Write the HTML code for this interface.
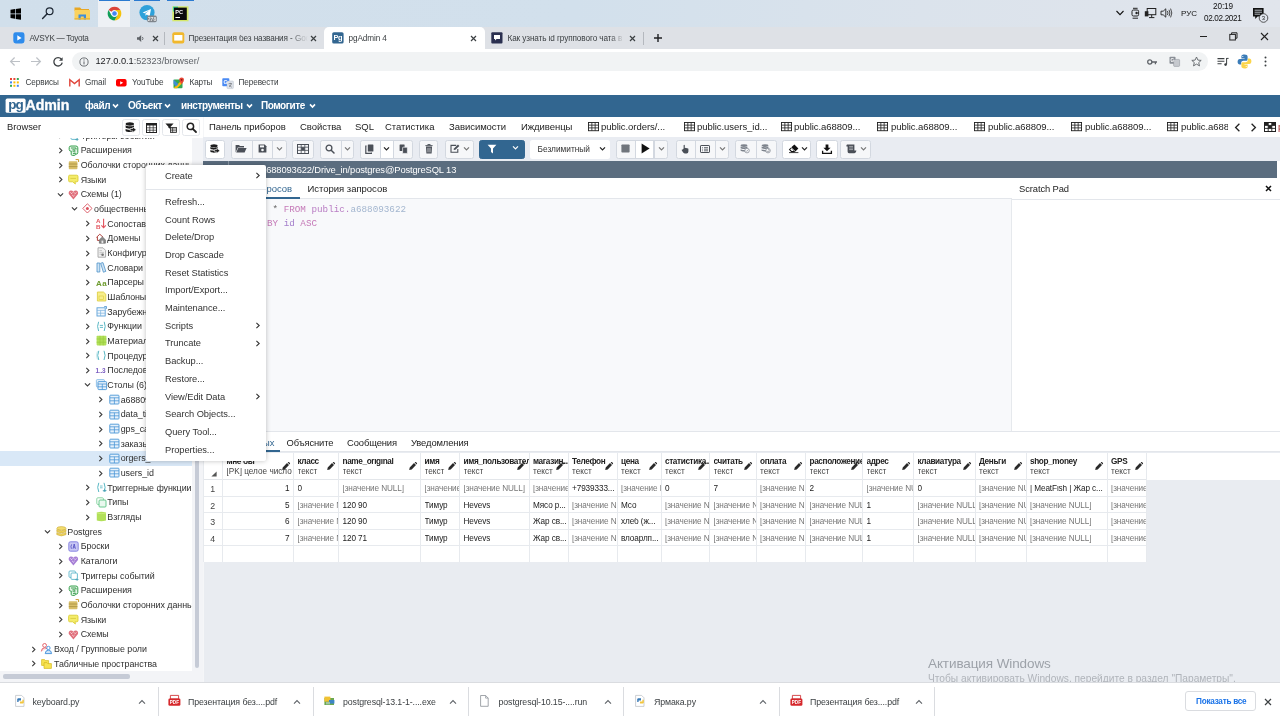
<!DOCTYPE html>
<html lang="ru">
<head>
<meta charset="utf-8">
<title>pgAdmin 4</title>
<style>
*{box-sizing:border-box;margin:0;padding:0}
html,body{width:1280px;height:720px;overflow:hidden;background:#fff}
body{position:relative;font-family:"Liberation Sans","DejaVu Sans",sans-serif;font-size:9px;color:#222;-webkit-font-smoothing:antialiased}
.abs{position:absolute}
.t{position:absolute;white-space:nowrap;line-height:1}
svg{position:absolute;overflow:visible}
/* taskbar */
#taskbar{left:0;top:0;width:1280px;height:27px;background:linear-gradient(90deg,#d1dfeb 0%,#d2e0ec 45%,#dbe3ec 72%,#e1e5ec 100%)}
/* chrome */
#tabstrip{left:0;top:27px;width:1280px;height:22px;background:#dee1e6}
#acttab{left:324px;top:27px;width:161px;height:22px;background:#fff;border-radius:5px 5px 0 0}
#addr{left:0;top:49px;width:1280px;height:24px;background:#fff}
#pill{left:72px;top:52px;width:1136px;height:19px;border-radius:10px;background:#f1f3f4}
#bm{left:0;top:73px;width:1280px;height:22px;background:#fff}
.tabt{font-size:8.2px;color:#3c4043;top:34.7px;letter-spacing:-0.1px}
.bmt{font-size:8.2px;color:#3c4043;top:78.9px;letter-spacing:-0.1px}
/* pgadmin */
#nav{left:0;top:95px;width:1280px;height:22px;background:#326690}
.navt{font-size:10px;color:#fff;top:100.7px;font-weight:bold;letter-spacing:-0.44px}
#left{left:0;top:117px;width:203px;height:565px;background:#fff}
#split{left:202.5px;top:117px;width:1.5px;height:565px;background:#f5f6f8}
#right{left:204px;top:117px;width:1076px;height:565px;background:#fff}
.ptab{font-size:9.5px;color:#222;top:122.4px;letter-spacing:-0.05px}
#tool{left:203px;top:137px;width:1077px;height:23.5px;background:#e9ecf2}
#title{left:203px;top:160.5px;width:1074px;height:17.5px;background:#5b6d7f}
#editor{left:204px;top:199px;width:808px;height:232px;background:#f8f9fb}
#scratch{left:1011px;top:178px;width:269px;height:253px;background:#fff;border-left:1px solid #e6e9ed}
#gridbg{left:204px;top:452px;width:1076px;height:230px;background:#e9ecf1}
.btn{position:absolute;top:139.5px;height:19px;background:#fff;border:1px solid #d5d9e0;border-radius:2.5px}
/* downloads */
#dl{left:0;top:682px;width:1280px;height:38px;background:#fff;border-top:1px solid #dadce0}
.dlt{font-size:8.8px;color:#3c4043;top:697.5px;letter-spacing:-0.1px}
.dsep{position:absolute;top:683px;width:1px;height:30px;background:#dadce0}
/* tree */
.tr{position:absolute;font-size:8.9px;letter-spacing:-0.05px;color:#303030;white-space:nowrap;line-height:1}
/* menu */
#menu{left:146px;top:164.7px;width:119.8px;height:296.6px;background:#fff;box-shadow:0 0 5px rgba(0,0,0,.25);border-radius:2px}
.mi{position:absolute;left:165px;font-size:9.3px;color:#333;letter-spacing:-0.05px;white-space:nowrap;line-height:1}
/* grid */
.gh{position:absolute;font-size:8.2px;line-height:1;white-space:nowrap;overflow:hidden}
.gc{position:absolute;font-size:8.2px;letter-spacing:-0.1px;line-height:1;white-space:nowrap;overflow:hidden;color:#222}
.nul{color:#777}
</style>
</head>
<body>
<div id="root" style="position:absolute;left:0;top:0;width:1280px;height:720px;will-change:transform">
<!-- ===== Windows taskbar ===== -->
<div class="abs" id="taskbar"></div>
<!-- ===== Chrome ===== -->
<div class="abs" id="tabstrip"></div>
<div class="abs" id="acttab"></div>
<div class="abs" id="addr"></div>
<div class="abs" id="pill"></div>
<div class="abs" id="bm"></div>
<!-- ===== pgAdmin ===== -->
<div class="abs" id="nav"></div>
<div class="abs" id="left"></div>
<div class="abs" id="split"></div>
<div class="abs" id="right"></div>
<div class="abs" id="tool"></div>
<div class="abs" id="title"></div>
<div class="abs" id="editor"></div>
<div class="abs" id="scratch"></div>
<div class="abs" id="gridbg"></div>
<!--TASKBAR-->
<!-- taskbar icons -->
<div class="abs" style="left:98px;top:0;width:32px;height:27px;background:#eef1f5"></div>
<div class="abs" style="left:99px;top:0;width:31px;height:1.3px;background:#2b7ad0"></div>
<div class="abs" style="left:134px;top:0;width:26px;height:1.3px;background:#2b7ad0"></div>
<div class="abs" style="left:167px;top:0;width:27px;height:1.3px;background:#2b7ad0"></div>
<svg style="left:10px;top:7.5px" width="12" height="12" viewBox="0 0 12 12"><path d="M0.5 1.8 L5 1.1 V5.6 H0.5Z M5.7 1 L11 0.2 V5.6 H5.7Z M0.5 6.3 H5 V10.8 L0.5 10.1Z M5.7 6.3 H11 V11.7 L5.7 10.9Z" fill="#000"/></svg>
<svg style="left:41px;top:6px" width="14" height="14" viewBox="0 0 14 14"><circle cx="8.6" cy="5.2" r="3.4" fill="none" stroke="#1d2733" stroke-width="1.2"/><path d="M6.2 7.8 L1.6 12.6" stroke="#1d2733" stroke-width="1.4" stroke-linecap="round"/></svg>
<svg style="left:74px;top:6.5px" width="17" height="13" viewBox="0 0 17 13"><path d="M0.5 0.5 H6 L7.5 2 H15 V4 H0.5Z" fill="#e8a723"/><rect x="0.5" y="3" width="15.5" height="9.5" fill="#fbd25e"/><path d="M4.5 12.5 V7.5 H12 V12.5 H9.8 V9.6 H6.7 V12.5Z" fill="#3f8edb"/><rect x="0.5" y="11.2" width="15.5" height="1.3" fill="#e6b33a"/></svg>
<svg style="left:107px;top:5.5px" width="15" height="15" viewBox="0 0 48 48"><circle cx="24" cy="24" r="22" fill="#fff"/><path d="M24 2 A22 22 0 0 1 43.05 13 H24 A11 11 0 0 0 14.47 18.5 L4.95 13 A22 22 0 0 1 24 2Z" fill="#db4437"/><path d="M43.05 13 A22 22 0 0 1 24 46 L33.53 29.5 A11 11 0 0 0 33.53 18.5 L24 13Z" fill="#f4c20d"/><path d="M24 46 A22 22 0 0 1 4.95 13 L14.47 29.5 A11 11 0 0 0 33.53 29.5Z" fill="#0f9d58"/><circle cx="24" cy="24" r="8.6" fill="#4285f4" stroke="#fff" stroke-width="2.4"/></svg>
<svg style="left:139px;top:5px" width="20" height="19" viewBox="0 0 20 19"><circle cx="8" cy="7.6" r="7.6" fill="#2ea1da"/><path d="M3.6 7.6 L12 4 L10.6 11.4 L7.8 9.4 L6.6 10.8 L6.4 8.6 L10.6 5.2 L5.6 8.3Z" fill="#fff"/><rect x="8.2" y="10.6" width="9.6" height="6.6" rx="1.6" fill="#7f858c"/><text x="13" y="16" font-size="5" fill="#e8e8e8" text-anchor="middle" font-family="Liberation Sans, sans-serif" font-weight="bold">278</text></svg>
<svg style="left:172px;top:5.5px" width="17" height="16" viewBox="0 0 17 16"><rect x="0.3" y="0.3" width="16.2" height="15" fill="#d5e86a"/><rect x="1" y="0.6" width="5" height="5" fill="#3ccf9a"/><rect x="2" y="1.6" width="12.8" height="12.4" fill="#0b0b0b"/><text x="3.3" y="7.8" font-size="5.6" fill="#fff" font-family="Liberation Sans, sans-serif" font-weight="bold">PC</text><rect x="3.4" y="11" width="4.6" height="1" fill="#fff"/></svg>
<!-- tray -->
<svg style="left:1115px;top:9px" width="10" height="8" viewBox="0 0 10 8"><path d="M1.5 2 L5 5.6 L8.5 2" fill="none" stroke="#111" stroke-width="1.1"/></svg>
<svg style="left:1130px;top:6.5px" width="11" height="13" viewBox="0 0 11 13"><rect x="2" y="3" width="6.6" height="6" rx="1.4" fill="none" stroke="#222" stroke-width="1"/><path d="M3 1.3 H7.6 M2.6 11.2 H8" stroke="#222" stroke-width="1"/><circle cx="6.6" cy="6" r="1.2" fill="#222"/></svg>
<svg style="left:1144px;top:7px" width="13" height="12" viewBox="0 0 13 12"><rect x="3.2" y="1.5" width="8.6" height="6.2" fill="none" stroke="#222" stroke-width="1"/><path d="M5 10.6 H10.4 M7.7 7.8 V10.4" stroke="#222" stroke-width="1"/><rect x="0.8" y="4.2" width="3.6" height="5.2" fill="#222"/></svg>
<svg style="left:1160px;top:7px" width="13" height="12" viewBox="0 0 13 12"><path d="M1 4.2 H3.2 L5.8 1.8 V10.2 L3.2 7.8 H1Z" fill="none" stroke="#222" stroke-width="0.9"/><path d="M7.4 4 Q8.6 6 7.4 8 M9 2.8 Q10.8 6 9 9.2 M10.6 1.6 Q13 6 10.6 10.4" fill="none" stroke="#222" stroke-width="0.8"/></svg>
<div class="t" style="left:1181px;top:9.5px;font-size:8px;color:#111">РУС</div>
<div class="t" style="left:1213px;top:2.5px;font-size:8.2px;color:#111;letter-spacing:-0.1px">20:19</div>
<div class="t" style="left:1204px;top:15px;font-size:8.2px;color:#111;letter-spacing:-0.35px">02.02.2021</div>
<svg style="left:1252px;top:7px" width="18" height="17" viewBox="0 0 18 17"><path d="M1 1 H11.6 V9.6 H5.6 L3.2 12 V9.6 H1Z" fill="#111"/><path d="M2.6 3.2 H10 M2.6 5.2 H10 M2.6 7.2 H8" stroke="#dde3ec" stroke-width="0.8"/><circle cx="11.5" cy="11" r="4.3" fill="#dfe4ec" stroke="#333" stroke-width="0.8"/><text x="11.5" y="13.2" font-size="6" fill="#222" text-anchor="middle" font-family="Liberation Sans, sans-serif">3</text></svg>
<!--/TASKBAR-->
<!--CHROME-->
<!-- tab 1 -->
<svg style="left:13px;top:32px" width="12" height="12" viewBox="0 0 12 12"><rect x="0.3" y="0.3" width="11.2" height="11.2" rx="2.4" fill="#2f8cec"/><path d="M4.3 3.3 L8.6 5.9 L4.3 8.5Z" fill="#fff"/></svg>
<div class="t tabt" style="left:29.5px;letter-spacing:-0.32px">AVSYK — Toyota</div>
<svg style="left:136px;top:33.5px" width="10" height="9" viewBox="0 0 10 9"><path d="M1 3.2 H2.8 L5.2 1 V8 L2.8 5.8 H1Z" fill="#5f6368"/><path d="M6.4 3 Q7.6 4.5 6.4 6" fill="none" stroke="#5f6368" stroke-width="0.9"/></svg>
<svg style="left:151.5px;top:35px" width="7" height="7" viewBox="0 0 7 7"><path d="M1 1 L6 6 M6 1 L1 6" stroke="#3c4043" stroke-width="1.2"/></svg>
<div class="abs" style="left:164px;top:32px;width:1px;height:13px;background:#b4b8be"></div>
<!-- tab 2 -->
<svg style="left:172px;top:32px" width="13" height="12" viewBox="0 0 13 12"><rect x="0.3" y="0.3" width="12" height="11.2" rx="2" fill="#f1b82d"/><rect x="2.2" y="3" width="8.2" height="5.6" fill="#fff"/></svg>
<div class="t tabt" style="left:188.5px;width:119px;overflow:hidden;-webkit-mask-image:linear-gradient(90deg,#000 85%,transparent 100%)">Презентация без названия - Google</div>
<svg style="left:310px;top:35px" width="7" height="7" viewBox="0 0 7 7"><path d="M1 1 L6 6 M6 1 L1 6" stroke="#3c4043" stroke-width="1.2"/></svg>
<!-- active tab -->
<svg style="left:332px;top:32px" width="12" height="12" viewBox="0 0 12 12"><rect x="0.2" y="0.2" width="11.4" height="11.4" rx="1.6" fill="#326690"/><text x="5.9" y="8.3" font-size="7.4" fill="#fff" text-anchor="middle" font-family="Liberation Sans, sans-serif" font-weight="bold" letter-spacing="-0.4">Pg</text></svg>
<div class="t tabt" style="left:348.5px">pgAdmin 4</div>
<svg style="left:469.5px;top:35px" width="7" height="7" viewBox="0 0 7 7"><path d="M1 1 L6 6 M6 1 L1 6" stroke="#3c4043" stroke-width="1.2"/></svg>
<!-- tab 4 -->
<svg style="left:491px;top:32px" width="12" height="12" viewBox="0 0 12 12"><rect x="0.3" y="0.3" width="11.2" height="11.2" rx="1" fill="#2b3050"/><path d="M3 3 H9 V7 H5.6 L4 8.6 V7 H3Z" fill="#fff"/></svg>
<div class="t tabt" style="left:507.5px;width:116px;overflow:hidden;-webkit-mask-image:linear-gradient(90deg,#000 88%,transparent 100%)">Как узнать id группового чата в Telegram</div>
<svg style="left:629px;top:35px" width="7" height="7" viewBox="0 0 7 7"><path d="M1 1 L6 6 M6 1 L1 6" stroke="#3c4043" stroke-width="1.2"/></svg>
<div class="abs" style="left:643px;top:32px;width:1px;height:13px;background:#b4b8be"></div>
<svg style="left:653px;top:33px" width="10" height="10" viewBox="0 0 10 10"><path d="M5 1 V9 M1 5 H9" stroke="#202124" stroke-width="1.4"/></svg>
<!-- window controls -->
<div class="abs" style="left:1200px;top:36px;width:7px;height:1px;background:#222"></div>
<svg style="left:1229px;top:32px" width="9" height="9" viewBox="0 0 9 9"><rect x="0.8" y="2.4" width="5.6" height="5.6" fill="none" stroke="#222" stroke-width="1"/><path d="M2.6 2.2 V0.8 H8 V6.2 H6.6" fill="none" stroke="#222" stroke-width="1"/></svg>
<svg style="left:1260px;top:32px" width="9" height="9" viewBox="0 0 9 9"><path d="M1 1 L8 8 M8 1 L1 8" stroke="#222" stroke-width="1.1"/></svg>
<!-- address bar -->
<svg style="left:9px;top:56px" width="12" height="11" viewBox="0 0 12 11"><path d="M11 5.5 H1.8 M5.6 1.5 L1.6 5.5 L5.6 9.5" fill="none" stroke="#bdc1c6" stroke-width="1.2"/></svg>
<svg style="left:30px;top:56px" width="12" height="11" viewBox="0 0 12 11"><path d="M1 5.5 H10.2 M6.4 1.5 L10.4 5.5 L6.4 9.5" fill="none" stroke="#bdc1c6" stroke-width="1.2"/></svg>
<svg style="left:52px;top:55.5px" width="12" height="12" viewBox="0 0 12 12"><path d="M9.4 3.2 A4.2 4.2 0 1 0 10.2 6.6" fill="none" stroke="#3c4043" stroke-width="1.3"/><path d="M10.6 1.2 V4.8 H7Z" fill="#3c4043"/></svg>
<svg style="left:78.5px;top:56.5px" width="10" height="10" viewBox="0 0 10 10"><circle cx="5" cy="5" r="4.1" fill="none" stroke="#5f6368" stroke-width="0.9"/><path d="M5 4.4 V7.4" stroke="#5f6368" stroke-width="1"/><circle cx="5" cy="2.9" r="0.6" fill="#5f6368"/></svg>
<div class="t" style="left:95.5px;top:56.5px;font-size:9.25px;color:#202124;letter-spacing:-0.05px">127.0.0.1<span style="color:#5f6368">:52323/browser/</span></div>
<svg style="left:1147px;top:57.5px" width="11" height="8" viewBox="0 0 11 8"><circle cx="2.8" cy="4" r="2.1" fill="none" stroke="#5f6368" stroke-width="1.3"/><path d="M4.8 4 H10 M8.4 4 V6.2" stroke="#5f6368" stroke-width="1.3"/></svg>
<svg style="left:1169px;top:56px" width="11" height="11" viewBox="0 0 11 11"><rect x="0.5" y="0.8" width="6" height="7" rx="0.8" fill="#8a8f96"/><rect x="4.6" y="3.4" width="6" height="7" rx="0.8" fill="#c6c9ce" stroke="#8a8f96" stroke-width="0.5"/><text x="3.4" y="6.4" font-size="4.6" fill="#fff" text-anchor="middle" font-family="Liberation Sans, sans-serif" font-weight="bold">G</text></svg>
<svg style="left:1190.5px;top:55.5px" width="11" height="11" viewBox="0 0 11 11"><path d="M5.5 1 L6.9 4.1 L10.2 4.4 L7.7 6.6 L8.5 9.9 L5.5 8.1 L2.5 9.9 L3.3 6.6 L0.8 4.4 L4.1 4.1Z" fill="none" stroke="#5f6368" stroke-width="0.9" stroke-linejoin="round"/></svg>
<svg style="left:1217px;top:56.5px" width="12" height="10" viewBox="0 0 12 10"><path d="M0.5 1.6 H7.4 M0.5 4.2 H7.4 M0.5 6.8 H4.6" stroke="#3c4043" stroke-width="1.1"/><path d="M9.6 1 V7.2 M9.6 1.4 H11.6" stroke="#3c4043" stroke-width="1" fill="none"/><circle cx="8.6" cy="7.6" r="1.3" fill="#3c4043"/></svg>
<svg style="left:1236.5px;top:53.5px" width="15" height="15" viewBox="0 0 15 15"><path d="M7.4 0.6 C4.6 0.6 4.4 1.8 4.4 2.8 V4.4 H7.6 V5 H2.8 C1.4 5 0.6 6.2 0.6 7.8 C0.6 9.6 1.4 10.6 2.8 10.6 H4.2 V8.8 C4.2 7.6 5.2 6.8 6.4 6.8 H9 C10 6.8 10.6 6.2 10.6 5.2 V2.8 C10.6 1.4 9.6 0.6 7.4 0.6Z" fill="#3b7cb8"/><path d="M7.6 14.4 C10.4 14.4 10.6 13.2 10.6 12.2 V10.6 H7.4 V10 H12.2 C13.6 10 14.4 8.8 14.4 7.2 C14.4 5.4 13.6 4.4 12.2 4.4 H10.8 V6.2 C10.8 7.4 9.8 8.2 8.6 8.2 H6 C5 8.2 4.4 8.8 4.4 9.8 V12.2 C4.4 13.6 5.4 14.4 7.6 14.4Z" fill="#fbd54a"/><circle cx="5.8" cy="2.5" r="0.6" fill="#fff"/><circle cx="9.2" cy="12.5" r="0.6" fill="#fff"/></svg>
<svg style="left:1263.5px;top:56px" width="3" height="11" viewBox="0 0 3 11"><circle cx="1.5" cy="1.6" r="1" fill="#3c4043"/><circle cx="1.5" cy="5.5" r="1" fill="#3c4043"/><circle cx="1.5" cy="9.4" r="1" fill="#3c4043"/></svg>
<!-- bookmarks -->
<svg style="left:10px;top:78px" width="9" height="9" viewBox="0 0 9 9"><g><rect x="0" y="0" width="2" height="2" fill="#ea4335"/><rect x="3.4" y="0" width="2" height="2" fill="#ea4335"/><rect x="6.8" y="0" width="2" height="2" fill="#34a853"/><rect x="0" y="3.4" width="2" height="2" fill="#4285f4"/><rect x="3.4" y="3.4" width="2" height="2" fill="#fbbc05"/><rect x="6.8" y="3.4" width="2" height="2" fill="#fbbc05"/><rect x="0" y="6.8" width="2" height="2" fill="#34a853"/><rect x="3.4" y="6.8" width="2" height="2" fill="#fbbc05"/><rect x="6.8" y="6.8" width="2" height="2" fill="#4285f4"/></g></svg>
<div class="t bmt" style="left:25.5px">Сервисы</div>
<svg style="left:68.5px;top:79px" width="11" height="8" viewBox="0 0 11 8"><path d="M0.8 7.6 V0.8 L5.5 4.6 L10.2 0.8 V7.6" fill="none" stroke="#e0443a" stroke-width="1.4"/></svg>
<div class="t bmt" style="left:85px">Gmail</div>
<svg style="left:116px;top:78.5px" width="11" height="8" viewBox="0 0 11 8"><rect x="0" y="0" width="10.6" height="7.6" rx="2" fill="#f00"/><path d="M4.2 2.2 L7.2 3.8 L4.2 5.4Z" fill="#fff"/></svg>
<div class="t bmt" style="left:132px">YouTube</div>
<svg style="left:173px;top:77px" width="12" height="12" viewBox="0 0 12 12"><rect x="0.5" y="2.6" width="9" height="8.6" rx="1" fill="#34a853"/><path d="M0.5 11.2 L9.5 2.6 V6 L4 11.2Z" fill="#fbbc05"/><path d="M0.5 2.6 L5.4 7.2 L3.2 9.4 L0.5 6.8Z" fill="#4285f4" opacity=".8"/><circle cx="8.6" cy="2.8" r="2.4" fill="#ea4335"/><path d="M6.6 4 L8.6 7.4 L10.6 4Z" fill="#ea4335"/><circle cx="8.6" cy="2.8" r="0.9" fill="#7a1a12"/></svg>
<div class="t bmt" style="left:189.5px">Карты</div>
<svg style="left:222px;top:77.5px" width="12" height="11" viewBox="0 0 12 11"><rect x="0.3" y="0.3" width="7" height="8" rx="0.8" fill="#4a8af4"/><rect x="5" y="3" width="6.4" height="7.6" rx="0.8" fill="#dfe3ea" stroke="#aab2bf" stroke-width="0.4"/><text x="3.6" y="6.4" font-size="5.4" fill="#fff" text-anchor="middle" font-family="Liberation Sans, sans-serif" font-weight="bold">G</text><path d="M6.6 5.6 H10 M8.3 4.8 V5.6 M7 9 Q9 7.6 9.4 5.8 M7.2 6.8 Q8.2 8.6 9.8 9.2" fill="none" stroke="#5f6368" stroke-width="0.6"/></svg>
<div class="t bmt" style="left:238.5px">Перевести</div>
<!--/CHROME-->
<!--NAV-->
<svg style="left:5px;top:98px" width="66" height="16" viewBox="0 0 66 16"><rect x="0.6" y="0.6" width="20" height="14.2" rx="1.6" fill="#fff"/><text x="10.6" y="11.2" font-size="13.5" fill="#326690" text-anchor="middle" font-family="Liberation Sans, sans-serif" font-weight="bold" letter-spacing="-0.8">pg</text><text x="20.6" y="12.4" font-size="14.2" fill="#fff" stroke="#fff" stroke-width="0.35" font-family="Liberation Sans, sans-serif" font-weight="bold" letter-spacing="-0.1">Admin</text></svg>
<div class="t navt" style="left:85px">файл</div>
<svg style="left:111.5px;top:103px" width="7" height="6" viewBox="0 0 7 6"><path d="M1 1.4 L3.5 4 L6 1.4" fill="none" stroke="#fff" stroke-width="1.6"/></svg>
<div class="t navt" style="left:128px">Объект</div>
<svg style="left:163.5px;top:103px" width="7" height="6" viewBox="0 0 7 6"><path d="M1 1.4 L3.5 4 L6 1.4" fill="none" stroke="#fff" stroke-width="1.6"/></svg>
<div class="t navt" style="left:181px">инструменты</div>
<svg style="left:245.5px;top:103px" width="7" height="6" viewBox="0 0 7 6"><path d="M1 1.4 L3.5 4 L6 1.4" fill="none" stroke="#fff" stroke-width="1.6"/></svg>
<div class="t navt" style="left:261px">Помогите</div>
<svg style="left:308.5px;top:103px" width="7" height="6" viewBox="0 0 7 6"><path d="M1 1.4 L3.5 4 L6 1.4" fill="none" stroke="#fff" stroke-width="1.6"/></svg>
<!-- browser header -->
<div class="t" style="left:7px;top:122.5px;font-size:9.3px;color:#222">Browser</div>
<div class="btn" style="left:122px;top:119px;width:17.5px;height:16.5px;border-color:#e4e7eb"></div>
<div class="btn" style="left:142px;top:119px;width:17.5px;height:16.5px;border-color:#e4e7eb"></div>
<div class="btn" style="left:162px;top:119px;width:17.5px;height:16.5px;border-color:#e4e7eb"></div>
<div class="btn" style="left:182px;top:119px;width:17.5px;height:16.5px;border-color:#e4e7eb"></div>
<svg style="left:125.3px;top:122.2px" width="11.5" height="11" viewBox="0 0 11.5 11"><ellipse cx="4.8" cy="2" rx="4.2" ry="1.7" fill="#1c1c1c"/><path d="M0.6 3.3 C1.6 4.7 8 4.7 9 3.3 V5.6 C8 7 1.6 7 0.6 5.6Z M0.6 6.7 C1.6 8.1 8 8.1 9 6.7 V9 C8 10.4 1.6 10.4 0.6 9Z" fill="#1c1c1c"/><path d="M5.2 6.5 H7.8 V4.9 L11.2 7.7 L7.8 10.5 V8.9 H5.2Z" fill="#1c1c1c" stroke="#fff" stroke-width="0.6"/></svg>
<svg style="left:145.5px;top:122.5px" width="11" height="10" viewBox="0 0 11 10"><rect x="0.5" y="0.5" width="10" height="9" fill="none" stroke="#222" stroke-width="1"/><rect x="0.5" y="0.5" width="10" height="2" fill="#222"/><path d="M0.5 4.8 H10.5 M0.5 7.2 H10.5 M3.8 0.5 V9.5 M7.2 0.5 V9.5" stroke="#222" stroke-width="0.7"/></svg>
<svg style="left:165px;top:122.5px" width="12" height="10" viewBox="0 0 12 10"><path d="M0.4 0.6 H8.6 L5.6 3.8 V6 L3.4 4.8 V3.8Z" fill="#222"/><rect x="5.4" y="4.4" width="6" height="5" fill="#fff" stroke="#222" stroke-width="0.8"/><path d="M5.4 6 H11.4 M5.4 7.8 H11.4 M7.6 4.4 V9.4" stroke="#222" stroke-width="0.7"/></svg>
<svg style="left:185.5px;top:122px" width="11" height="11" viewBox="0 0 11 11"><circle cx="4.4" cy="4.4" r="3.2" fill="none" stroke="#222" stroke-width="1.5"/><path d="M6.8 6.8 L10 10" stroke="#222" stroke-width="1.8" stroke-linecap="round"/></svg>
<!--/NAV-->
<!--TREE-->
<div class="abs" style="left:0;top:138px;width:192px;height:533px;overflow:hidden">
<div class="abs" style="left:0;top:313.0px;width:192px;height:14.6px;background:#d9e8f7"></div>
<svg style="left:58.1px;top:-5.9px" width="6" height="7" viewBox="0 0 6 7"><path d="M1.3 0.9 L3.9 3.5 L1.3 6.1" fill="none" stroke="#3d3d3d" stroke-width="1.1"/></svg>
<svg style="left:67.9px;top:-8.0px" width="11" height="11" viewBox="0 0 11 11"><rect x="1" y="1" width="6.4" height="6.4" rx="1" fill="#fff" stroke="#5bb6c9" stroke-width="0.9"/><rect x="3" y="3" width="6.4" height="6.4" rx="1" fill="#fff" stroke="#5bb6c9" stroke-width="0.9"/><path d="M7.4 9.6 H10 M8.8 8.4 L10 9.6 L8.8 10.8" stroke="#2d8fa6" stroke-width="0.7" fill="none"/></svg>
<div class="tr" style="left:80.7px;top:-6.4px">Триггеры событий</div>
<svg style="left:58.1px;top:8.8px" width="6" height="7" viewBox="0 0 6 7"><path d="M1.3 0.9 L3.9 3.5 L1.3 6.1" fill="none" stroke="#3d3d3d" stroke-width="1.1"/></svg>
<svg style="left:67.9px;top:6.7px" width="11" height="11" viewBox="0 0 11 11"><path d="M1.2 2.6 Q1.2 1 3 1 H7.8 Q9.8 1 9.8 2.8 V7.6 Q9.8 9.2 8 9.2 H7.4 V9.6 Q7.4 10.4 6.4 10.4 H4.4 Q3.2 10.4 3.2 9.4 V6 H2.6 Q1.2 6 1.2 4.6Z" fill="#e4f5e6" stroke="#35a04c" stroke-width="1"/><path d="M3 3 H8 V4.6 M4.4 4.8 H6.8 V7.4 M4.6 6.2 H6 M5 8.4 H7.8" stroke="#2c9444" stroke-width="0.9" fill="none"/></svg>
<div class="tr" style="left:80.7px;top:8.3px">Расширения</div>
<svg style="left:58.1px;top:23.5px" width="6" height="7" viewBox="0 0 6 7"><path d="M1.3 0.9 L3.9 3.5 L1.3 6.1" fill="none" stroke="#3d3d3d" stroke-width="1.1"/></svg>
<svg style="left:67.9px;top:21.4px" width="11" height="11" viewBox="0 0 11 11"><rect x="0.8" y="2.2" width="8.6" height="8" rx="0.8" fill="#d8bf6a"/><path d="M0.8 5 H9.4 M0.8 7.6 H9.4" stroke="#a8903f" stroke-width="0.8"/><path d="M7.6 0.6 L10.6 0.6 L10.6 3" stroke="#c79a2e" stroke-width="1" fill="none"/></svg>
<div class="tr" style="left:80.7px;top:23.0px">Оболочки сторонних данных</div>
<svg style="left:58.1px;top:38.1px" width="6" height="7" viewBox="0 0 6 7"><path d="M1.3 0.9 L3.9 3.5 L1.3 6.1" fill="none" stroke="#3d3d3d" stroke-width="1.1"/></svg>
<svg style="left:67.9px;top:36.0px" width="11" height="11" viewBox="0 0 11 11"><path d="M1.6 1.2 H8.8 Q10 1.2 10 2.4 V6.6 Q10 7.8 8.8 7.8 H7 L7.4 10 L4.6 7.8 H1.6 Q0.6 7.8 0.6 6.6 V2.4 Q0.6 1.2 1.6 1.2Z" fill="#f4ec6a" stroke="#d8c92a" stroke-width="0.8"/><path d="M2.4 4.4 H8" stroke="#c9b82a" stroke-width="0.6"/></svg>
<div class="tr" style="left:80.7px;top:37.6px">Языки</div>
<svg style="left:57.2px;top:53.7px" width="7" height="6" viewBox="0 0 7 6"><path d="M0.9 1.3 L3.5 3.9 L6.1 1.3" fill="none" stroke="#3d3d3d" stroke-width="1.1"/></svg>
<svg style="left:67.9px;top:50.7px" width="11" height="11" viewBox="0 0 11 11"><path d="M5.4 10.4 L0.8 5 Q0.2 2 2.6 1.4 Q4.4 1.2 5.4 2.8 Q6.4 1.2 8.2 1.4 Q10.6 2 10 5Z" fill="#e0707c"/><path d="M2.4 3.4 L3.6 4.6 L4.8 3.4 M6 3.4 L7.2 4.6 L8.4 3.4 M4.2 6 L5.4 7.2 L6.6 6" stroke="#fff" stroke-width="0.7" fill="none"/></svg>
<div class="tr" style="left:80.7px;top:52.3px">Схемы (1)</div>
<svg style="left:70.5px;top:68.4px" width="7" height="6" viewBox="0 0 7 6"><path d="M0.9 1.3 L3.5 3.9 L6.1 1.3" fill="none" stroke="#3d3d3d" stroke-width="1.1"/></svg>
<svg style="left:81.6px;top:65.4px" width="11" height="11" viewBox="0 0 11 11"><path d="M5.4 0.8 L10 5.4 L5.4 10 L0.8 5.4Z" fill="#fff" stroke="#d9505c" stroke-width="0.9"/><circle cx="5.4" cy="5.4" r="1.5" fill="#d9505c"/></svg>
<div class="tr" style="left:94.0px;top:67.0px">общественный</div>
<svg style="left:84.7px;top:82.1px" width="6" height="7" viewBox="0 0 6 7"><path d="M1.3 0.9 L3.9 3.5 L1.3 6.1" fill="none" stroke="#3d3d3d" stroke-width="1.1"/></svg>
<svg style="left:95.5px;top:80.0px" width="11" height="11" viewBox="0 0 11 11"><text x="0" y="5" font-size="6.2" font-weight="bold" fill="#e2525c" font-family="Liberation Sans, sans-serif">A</text><text x="0" y="10.8" font-size="6.2" font-weight="bold" fill="#e2525c" font-family="Liberation Sans, sans-serif">B</text><path d="M7.6 0.8 V9.6 M5.4 7.4 L7.6 9.8 L9.8 7.4" stroke="#e2525c" stroke-width="1.1" fill="none"/></svg>
<div class="tr" style="left:107.3px;top:81.6px">Сопоставления</div>
<svg style="left:84.7px;top:96.8px" width="6" height="7" viewBox="0 0 6 7"><path d="M1.3 0.9 L3.9 3.5 L1.3 6.1" fill="none" stroke="#3d3d3d" stroke-width="1.1"/></svg>
<svg style="left:95.5px;top:94.7px" width="11" height="11" viewBox="0 0 11 11"><path d="M0.4 4.4 L3.8 1.2 L7.2 4.4 M1.4 4 V7.4 H3.4" stroke="#b0433e" stroke-width="1" fill="none"/><path d="M3.4 6.8 L6.4 4 L9.4 6.8 V10.2 H3.4Z" fill="#8a8a8a" stroke="#5a5a5a" stroke-width="0.6"/><rect x="5.5" y="7.6" width="1.8" height="2.6" fill="#e8e8e8"/></svg>
<div class="tr" style="left:107.3px;top:96.3px">Домены</div>
<svg style="left:84.7px;top:111.5px" width="6" height="7" viewBox="0 0 6 7"><path d="M1.3 0.9 L3.9 3.5 L1.3 6.1" fill="none" stroke="#3d3d3d" stroke-width="1.1"/></svg>
<svg style="left:95.5px;top:109.4px" width="11" height="11" viewBox="0 0 11 11"><path d="M2 0.8 H7 L9.6 3.4 V10.2 H2Z" fill="#f2f2f2" stroke="#9a9a9a" stroke-width="0.8"/><path d="M3.4 3.6 H6 M3.4 5.4 H8 M3.4 7.2 H8" stroke="#aaa" stroke-width="0.6"/><circle cx="6.6" cy="7.8" r="1.3" fill="#777"/></svg>
<div class="tr" style="left:107.3px;top:111.0px">Конфигурации FTS</div>
<svg style="left:84.7px;top:126.1px" width="6" height="7" viewBox="0 0 6 7"><path d="M1.3 0.9 L3.9 3.5 L1.3 6.1" fill="none" stroke="#3d3d3d" stroke-width="1.1"/></svg>
<svg style="left:95.5px;top:124.0px" width="11" height="11" viewBox="0 0 11 11"><path d="M1 1 H3.8 V10 H1Z" fill="#cfe4f5" stroke="#4f93c9" stroke-width="0.8"/><path d="M4.6 1.2 L7 0.6 L9.8 9.4 L7.4 10.2Z" fill="#cfe4f5" stroke="#4f93c9" stroke-width="0.8"/></svg>
<div class="tr" style="left:107.3px;top:125.6px">Словари FTS</div>
<svg style="left:84.7px;top:140.8px" width="6" height="7" viewBox="0 0 6 7"><path d="M1.3 0.9 L3.9 3.5 L1.3 6.1" fill="none" stroke="#3d3d3d" stroke-width="1.1"/></svg>
<svg style="left:95.5px;top:138.7px" width="11" height="11" viewBox="0 0 11 11"><text x="0" y="8.6" font-size="8" font-weight="bold" fill="#6e9c2f" font-family="Liberation Sans, sans-serif" letter-spacing="0.4">Aa</text></svg>
<div class="tr" style="left:107.3px;top:140.3px">Парсеры FTS</div>
<svg style="left:84.7px;top:155.5px" width="6" height="7" viewBox="0 0 6 7"><path d="M1.3 0.9 L3.9 3.5 L1.3 6.1" fill="none" stroke="#3d3d3d" stroke-width="1.1"/></svg>
<svg style="left:95.5px;top:153.4px" width="11" height="11" viewBox="0 0 11 11"><path d="M1.4 1 H7.4 L9.8 3.2 V10 H1.4Z" fill="#f7ee8a" stroke="#dcca3a" stroke-width="0.8"/><rect x="3" y="5" width="4.6" height="3.4" fill="none" stroke="#dcca3a" stroke-width="0.6"/></svg>
<div class="tr" style="left:107.3px;top:155.0px">Шаблоны FTS</div>
<svg style="left:84.7px;top:170.1px" width="6" height="7" viewBox="0 0 6 7"><path d="M1.3 0.9 L3.9 3.5 L1.3 6.1" fill="none" stroke="#3d3d3d" stroke-width="1.1"/></svg>
<svg style="left:95.5px;top:168.0px" width="11" height="11" viewBox="0 0 11 11"><rect x="1" y="1.8" width="8.2" height="8.2" fill="#f2f8fd" stroke="#5a9fd8" stroke-width="0.9"/><path d="M1 4.4 H9.2 M1 7.2 H9.2 M4.6 4.4 V10" stroke="#7db3e0" stroke-width="0.7"/><path d="M8.2 0.5 H10.5 V2.8" stroke="#4a90d0" stroke-width="0.8" fill="none"/></svg>
<div class="tr" style="left:107.3px;top:169.6px">Зарубежные таблицы</div>
<svg style="left:84.7px;top:184.8px" width="6" height="7" viewBox="0 0 6 7"><path d="M1.3 0.9 L3.9 3.5 L1.3 6.1" fill="none" stroke="#3d3d3d" stroke-width="1.1"/></svg>
<svg style="left:95.5px;top:182.7px" width="11" height="11" viewBox="0 0 11 11"><path d="M2.6 0.8 Q0.6 5.4 2.6 10 M8.2 0.8 Q10.2 5.4 8.2 10" stroke="#58b7c4" stroke-width="1" fill="none"/><path d="M3.8 4.4 H7 M3.8 6.4 H7" stroke="#58b7c4" stroke-width="0.9"/></svg>
<div class="tr" style="left:107.3px;top:184.3px">Функции</div>
<svg style="left:84.7px;top:199.5px" width="6" height="7" viewBox="0 0 6 7"><path d="M1.3 0.9 L3.9 3.5 L1.3 6.1" fill="none" stroke="#3d3d3d" stroke-width="1.1"/></svg>
<svg style="left:95.5px;top:197.4px" width="11" height="11" viewBox="0 0 11 11"><rect x="0.6" y="0.8" width="9.8" height="9.6" rx="0.8" fill="#b2e05a"/><path d="M0.6 4 H10.4 M0.6 7.2 H10.4 M4 0.8 V10.4 M7.2 0.8 V10.4" stroke="#9acc3c" stroke-width="0.7"/></svg>
<div class="tr" style="left:107.3px;top:199.0px">Материализованные представления</div>
<svg style="left:84.7px;top:214.1px" width="6" height="7" viewBox="0 0 6 7"><path d="M1.3 0.9 L3.9 3.5 L1.3 6.1" fill="none" stroke="#3d3d3d" stroke-width="1.1"/></svg>
<svg style="left:95.5px;top:212.0px" width="11" height="11" viewBox="0 0 11 11"><path d="M2.8 0.8 Q0.6 5.4 2.8 10 M8 0.8 Q10.2 5.4 8 10" stroke="#58b7c4" stroke-width="1" fill="none"/><path d="M1.4 1.4 Q0 5.4 1.4 9.4" stroke="#9fd6de" stroke-width="0.7" fill="none"/></svg>
<div class="tr" style="left:107.3px;top:213.6px">Процедуры</div>
<svg style="left:84.7px;top:228.8px" width="6" height="7" viewBox="0 0 6 7"><path d="M1.3 0.9 L3.9 3.5 L1.3 6.1" fill="none" stroke="#3d3d3d" stroke-width="1.1"/></svg>
<svg style="left:95.5px;top:226.7px" width="11" height="11" viewBox="0 0 11 11"><text x="-0.4" y="8.2" font-size="6.4" font-weight="bold" fill="#7a5bc0" font-family="Liberation Sans, sans-serif" letter-spacing="-0.2">1..3</text></svg>
<div class="tr" style="left:107.3px;top:228.3px">Последовательности</div>
<svg style="left:83.8px;top:244.4px" width="7" height="6" viewBox="0 0 7 6"><path d="M0.9 1.3 L3.5 3.9 L6.1 1.3" fill="none" stroke="#3d3d3d" stroke-width="1.1"/></svg>
<svg style="left:95.5px;top:241.4px" width="11" height="11" viewBox="0 0 11 11"><rect x="0.4" y="0.6" width="8" height="7.4" rx="0.8" fill="#e6f1fb" stroke="#7db6e4" stroke-width="0.8"/><rect x="2" y="2.6" width="8.6" height="8" rx="0.8" fill="#e6f1fb" stroke="#4a96d6" stroke-width="0.9"/><path d="M2 5 H10.6 M2 7.8 H10.6 M6.3 5 V10.6" stroke="#4a96d6" stroke-width="0.8"/></svg>
<div class="tr" style="left:107.3px;top:243.0px">Столы (6)</div>
<svg style="left:98.1px;top:258.1px" width="6" height="7" viewBox="0 0 6 7"><path d="M1.3 0.9 L3.9 3.5 L1.3 6.1" fill="none" stroke="#3d3d3d" stroke-width="1.1"/></svg>
<svg style="left:108.5px;top:256.0px" width="11" height="11" viewBox="0 0 11 11"><rect x="0.8" y="1.2" width="9.2" height="8.8" rx="0.8" fill="#e6f1fb" stroke="#4a96d6" stroke-width="0.9"/><path d="M0.8 3.8 H10 M0.8 6.8 H10 M5.4 3.8 V10" stroke="#4a96d6" stroke-width="0.8"/></svg>
<div class="tr" style="left:120.7px;top:257.6px">a688093622</div>
<svg style="left:98.1px;top:272.8px" width="6" height="7" viewBox="0 0 6 7"><path d="M1.3 0.9 L3.9 3.5 L1.3 6.1" fill="none" stroke="#3d3d3d" stroke-width="1.1"/></svg>
<svg style="left:108.5px;top:270.7px" width="11" height="11" viewBox="0 0 11 11"><rect x="0.8" y="1.2" width="9.2" height="8.8" rx="0.8" fill="#e6f1fb" stroke="#4a96d6" stroke-width="0.9"/><path d="M0.8 3.8 H10 M0.8 6.8 H10 M5.4 3.8 V10" stroke="#4a96d6" stroke-width="0.8"/></svg>
<div class="tr" style="left:120.7px;top:272.3px">data_time</div>
<svg style="left:98.1px;top:287.5px" width="6" height="7" viewBox="0 0 6 7"><path d="M1.3 0.9 L3.9 3.5 L1.3 6.1" fill="none" stroke="#3d3d3d" stroke-width="1.1"/></svg>
<svg style="left:108.5px;top:285.4px" width="11" height="11" viewBox="0 0 11 11"><rect x="0.8" y="1.2" width="9.2" height="8.8" rx="0.8" fill="#e6f1fb" stroke="#4a96d6" stroke-width="0.9"/><path d="M0.8 3.8 H10 M0.8 6.8 H10 M5.4 3.8 V10" stroke="#4a96d6" stroke-width="0.8"/></svg>
<div class="tr" style="left:120.7px;top:287.0px">gps_car</div>
<svg style="left:98.1px;top:302.1px" width="6" height="7" viewBox="0 0 6 7"><path d="M1.3 0.9 L3.9 3.5 L1.3 6.1" fill="none" stroke="#3d3d3d" stroke-width="1.1"/></svg>
<svg style="left:108.5px;top:300.0px" width="11" height="11" viewBox="0 0 11 11"><rect x="0.8" y="1.2" width="9.2" height="8.8" rx="0.8" fill="#e6f1fb" stroke="#4a96d6" stroke-width="0.9"/><path d="M0.8 3.8 H10 M0.8 6.8 H10 M5.4 3.8 V10" stroke="#4a96d6" stroke-width="0.8"/></svg>
<div class="tr" style="left:120.7px;top:301.6px">заказы</div>
<svg style="left:98.1px;top:316.8px" width="6" height="7" viewBox="0 0 6 7"><path d="M1.3 0.9 L3.9 3.5 L1.3 6.1" fill="none" stroke="#3d3d3d" stroke-width="1.1"/></svg>
<svg style="left:108.5px;top:314.7px" width="11" height="11" viewBox="0 0 11 11"><rect x="0.8" y="1.2" width="9.2" height="8.8" rx="0.8" fill="#e6f1fb" stroke="#4a96d6" stroke-width="0.9"/><path d="M0.8 3.8 H10 M0.8 6.8 H10 M5.4 3.8 V10" stroke="#4a96d6" stroke-width="0.8"/></svg>
<div class="tr" style="left:120.7px;top:316.3px">orgers_id</div>
<svg style="left:98.1px;top:331.5px" width="6" height="7" viewBox="0 0 6 7"><path d="M1.3 0.9 L3.9 3.5 L1.3 6.1" fill="none" stroke="#3d3d3d" stroke-width="1.1"/></svg>
<svg style="left:108.5px;top:329.4px" width="11" height="11" viewBox="0 0 11 11"><rect x="0.8" y="1.2" width="9.2" height="8.8" rx="0.8" fill="#e6f1fb" stroke="#4a96d6" stroke-width="0.9"/><path d="M0.8 3.8 H10 M0.8 6.8 H10 M5.4 3.8 V10" stroke="#4a96d6" stroke-width="0.8"/></svg>
<div class="tr" style="left:120.7px;top:331.0px">users_id</div>
<svg style="left:84.7px;top:346.1px" width="6" height="7" viewBox="0 0 6 7"><path d="M1.3 0.9 L3.9 3.5 L1.3 6.1" fill="none" stroke="#3d3d3d" stroke-width="1.1"/></svg>
<svg style="left:95.5px;top:344.0px" width="11" height="11" viewBox="0 0 11 11"><path d="M2.8 0.8 Q0.6 5.4 2.8 10 M8 0.8 Q10.2 5.4 8 10" stroke="#58b7c4" stroke-width="1" fill="none"/><path d="M4 4 H6.6 M4 5.8 H6.6" stroke="#58b7c4" stroke-width="0.8"/><path d="M6.8 8.6 H10 M8.8 7.4 L10 8.6 L8.8 9.8" stroke="#2d8fa6" stroke-width="0.7" fill="none"/></svg>
<div class="tr" style="left:107.3px;top:345.6px">Триггерные функции</div>
<svg style="left:84.7px;top:360.8px" width="6" height="7" viewBox="0 0 6 7"><path d="M1.3 0.9 L3.9 3.5 L1.3 6.1" fill="none" stroke="#3d3d3d" stroke-width="1.1"/></svg>
<svg style="left:95.5px;top:358.7px" width="11" height="11" viewBox="0 0 11 11"><rect x="0.8" y="0.8" width="6.6" height="6.6" rx="1" fill="#fff" stroke="#7fd09a" stroke-width="0.9"/><rect x="3" y="3" width="7" height="7" rx="1" fill="#e9f8ee" stroke="#5cc483" stroke-width="0.9"/></svg>
<div class="tr" style="left:107.3px;top:360.3px">Типы</div>
<svg style="left:84.7px;top:375.5px" width="6" height="7" viewBox="0 0 6 7"><path d="M1.3 0.9 L3.9 3.5 L1.3 6.1" fill="none" stroke="#3d3d3d" stroke-width="1.1"/></svg>
<svg style="left:95.5px;top:373.4px" width="11" height="11" viewBox="0 0 11 11"><path d="M0.8 1.6 Q5.4 0 10 1.6 V9.6 Q5.4 11 0.8 9.6Z" fill="#b2e05a"/><path d="M0.8 2 Q5.4 3.4 10 2" stroke="#d4f08a" stroke-width="0.7" fill="none"/></svg>
<div class="tr" style="left:107.3px;top:375.0px">Взгляды</div>
<svg style="left:43.8px;top:391.0px" width="7" height="6" viewBox="0 0 7 6"><path d="M0.9 1.3 L3.5 3.9 L6.1 1.3" fill="none" stroke="#3d3d3d" stroke-width="1.1"/></svg>
<svg style="left:55.5px;top:388.0px" width="11" height="11" viewBox="0 0 11 11"><ellipse cx="5.4" cy="2.4" rx="4.6" ry="1.8" fill="#f3dd6e" stroke="#c9a93a" stroke-width="0.6"/><path d="M0.8 3.6 Q5.4 6.2 10 3.6 V5.6 Q5.4 8.2 0.8 5.6Z M0.8 6.6 Q5.4 9.2 10 6.6 V8.6 Q5.4 11.2 0.8 8.6Z" fill="#efd45a" stroke="#c9a93a" stroke-width="0.6"/></svg>
<div class="tr" style="left:67.3px;top:389.6px">Postgres</div>
<svg style="left:58.1px;top:404.8px" width="6" height="7" viewBox="0 0 6 7"><path d="M1.3 0.9 L3.9 3.5 L1.3 6.1" fill="none" stroke="#3d3d3d" stroke-width="1.1"/></svg>
<svg style="left:67.9px;top:402.7px" width="11" height="11" viewBox="0 0 11 11"><rect x="0.8" y="0.8" width="9.4" height="9.4" rx="1.6" fill="#c9c8f4" stroke="#7f7be0" stroke-width="0.9"/><path d="M3.4 7.8 Q2.4 5.4 3.6 3.4 M5 7.8 L6.2 3 L7.4 7.8 M5.6 6.2 H6.8" stroke="#4d49c0" stroke-width="0.8" fill="none"/></svg>
<div class="tr" style="left:80.7px;top:404.3px">Броски</div>
<svg style="left:58.1px;top:419.5px" width="6" height="7" viewBox="0 0 6 7"><path d="M1.3 0.9 L3.9 3.5 L1.3 6.1" fill="none" stroke="#3d3d3d" stroke-width="1.1"/></svg>
<svg style="left:67.9px;top:417.4px" width="11" height="11" viewBox="0 0 11 11"><path d="M5.4 10.4 L0.8 5 Q0.2 2 2.6 1.4 Q4.4 1.2 5.4 2.8 Q6.4 1.2 8.2 1.4 Q10.6 2 10 5Z" fill="#a77fd6"/><path d="M2.4 3.4 L3.6 4.6 L4.8 3.4 M6 3.4 L7.2 4.6 L8.4 3.4 M4.2 6 L5.4 7.2 L6.6 6" stroke="#fff" stroke-width="0.7" fill="none"/></svg>
<div class="tr" style="left:80.7px;top:419.0px">Каталоги</div>
<svg style="left:58.1px;top:434.1px" width="6" height="7" viewBox="0 0 6 7"><path d="M1.3 0.9 L3.9 3.5 L1.3 6.1" fill="none" stroke="#3d3d3d" stroke-width="1.1"/></svg>
<svg style="left:67.9px;top:432.0px" width="11" height="11" viewBox="0 0 11 11"><rect x="1" y="1" width="6.4" height="6.4" rx="1" fill="#fff" stroke="#5bb6c9" stroke-width="0.9"/><rect x="3" y="3" width="6.4" height="6.4" rx="1" fill="#fff" stroke="#5bb6c9" stroke-width="0.9"/><path d="M7.4 9.6 H10 M8.8 8.4 L10 9.6 L8.8 10.8" stroke="#2d8fa6" stroke-width="0.7" fill="none"/></svg>
<div class="tr" style="left:80.7px;top:433.6px">Триггеры событий</div>
<svg style="left:58.1px;top:448.8px" width="6" height="7" viewBox="0 0 6 7"><path d="M1.3 0.9 L3.9 3.5 L1.3 6.1" fill="none" stroke="#3d3d3d" stroke-width="1.1"/></svg>
<svg style="left:67.9px;top:446.7px" width="11" height="11" viewBox="0 0 11 11"><path d="M1.2 2.6 Q1.2 1 3 1 H7.8 Q9.8 1 9.8 2.8 V7.6 Q9.8 9.2 8 9.2 H7.4 V9.6 Q7.4 10.4 6.4 10.4 H4.4 Q3.2 10.4 3.2 9.4 V6 H2.6 Q1.2 6 1.2 4.6Z" fill="#e4f5e6" stroke="#35a04c" stroke-width="1"/><path d="M3 3 H8 V4.6 M4.4 4.8 H6.8 V7.4 M4.6 6.2 H6 M5 8.4 H7.8" stroke="#2c9444" stroke-width="0.9" fill="none"/></svg>
<div class="tr" style="left:80.7px;top:448.3px">Расширения</div>
<svg style="left:58.1px;top:463.5px" width="6" height="7" viewBox="0 0 6 7"><path d="M1.3 0.9 L3.9 3.5 L1.3 6.1" fill="none" stroke="#3d3d3d" stroke-width="1.1"/></svg>
<svg style="left:67.9px;top:461.4px" width="11" height="11" viewBox="0 0 11 11"><rect x="0.8" y="2.2" width="8.6" height="8" rx="0.8" fill="#d8bf6a"/><path d="M0.8 5 H9.4 M0.8 7.6 H9.4" stroke="#a8903f" stroke-width="0.8"/><path d="M7.6 0.6 L10.6 0.6 L10.6 3" stroke="#c79a2e" stroke-width="1" fill="none"/></svg>
<div class="tr" style="left:80.7px;top:463.0px">Оболочки сторонних данных</div>
<svg style="left:58.1px;top:478.1px" width="6" height="7" viewBox="0 0 6 7"><path d="M1.3 0.9 L3.9 3.5 L1.3 6.1" fill="none" stroke="#3d3d3d" stroke-width="1.1"/></svg>
<svg style="left:67.9px;top:476.0px" width="11" height="11" viewBox="0 0 11 11"><path d="M1.6 1.2 H8.8 Q10 1.2 10 2.4 V6.6 Q10 7.8 8.8 7.8 H7 L7.4 10 L4.6 7.8 H1.6 Q0.6 7.8 0.6 6.6 V2.4 Q0.6 1.2 1.6 1.2Z" fill="#f4ec6a" stroke="#d8c92a" stroke-width="0.8"/><path d="M2.4 4.4 H8" stroke="#c9b82a" stroke-width="0.6"/></svg>
<div class="tr" style="left:80.7px;top:477.6px">Языки</div>
<svg style="left:58.1px;top:492.8px" width="6" height="7" viewBox="0 0 6 7"><path d="M1.3 0.9 L3.9 3.5 L1.3 6.1" fill="none" stroke="#3d3d3d" stroke-width="1.1"/></svg>
<svg style="left:67.9px;top:490.7px" width="11" height="11" viewBox="0 0 11 11"><path d="M5.4 10.4 L0.8 5 Q0.2 2 2.6 1.4 Q4.4 1.2 5.4 2.8 Q6.4 1.2 8.2 1.4 Q10.6 2 10 5Z" fill="#e0707c"/><path d="M2.4 3.4 L3.6 4.6 L4.8 3.4 M6 3.4 L7.2 4.6 L8.4 3.4 M4.2 6 L5.4 7.2 L6.6 6" stroke="#fff" stroke-width="0.7" fill="none"/></svg>
<div class="tr" style="left:80.7px;top:492.3px">Схемы</div>
<svg style="left:31.4px;top:507.5px" width="6" height="7" viewBox="0 0 6 7"><path d="M1.3 0.9 L3.9 3.5 L1.3 6.1" fill="none" stroke="#3d3d3d" stroke-width="1.1"/></svg>
<svg style="left:41.4px;top:505.4px" width="11" height="11" viewBox="0 0 11 11"><circle cx="3.6" cy="2.4" r="1.9" fill="#fff" stroke="#e0545c" stroke-width="0.9"/><path d="M0.4 8.4 Q0.6 4.8 3.6 4.8 Q5.4 4.8 6 6" fill="#fbe1e3" stroke="#e0545c" stroke-width="0.9"/><circle cx="7.4" cy="5" r="1.7" fill="#fff" stroke="#3f8edb" stroke-width="0.9"/><path d="M4.2 10.6 Q4.4 7.2 7.4 7.2 Q10.4 7.2 10.6 10.6Z" fill="#cfe4f8" stroke="#3f8edb" stroke-width="0.9"/></svg>
<div class="tr" style="left:54.0px;top:507.0px">Вход / Групповые роли</div>
<svg style="left:31.4px;top:522.1px" width="6" height="7" viewBox="0 0 6 7"><path d="M1.3 0.9 L3.9 3.5 L1.3 6.1" fill="none" stroke="#3d3d3d" stroke-width="1.1"/></svg>
<svg style="left:41.4px;top:520.0px" width="11" height="11" viewBox="0 0 11 11"><path d="M0.6 1.6 H3.6 L4.4 2.6 H7.6 V7.4 H0.6Z" fill="#f7e352" stroke="#d4b81e" stroke-width="0.7"/><path d="M3 4.6 H6 L6.8 5.6 H10.4 V10.4 H3Z" fill="#f7e352" stroke="#d4b81e" stroke-width="0.7"/></svg>
<div class="tr" style="left:54.0px;top:521.6px">Табличные пространства</div>
</div>
<div class="abs" style="left:192px;top:138px;width:10.5px;height:533px;background:#f3f4f7"></div>
<div class="abs" style="left:194.5px;top:170px;width:4px;height:498px;background:#c6cbd6;border-radius:2px"></div>
<div class="abs" style="left:0;top:671px;width:203px;height:11px;background:#f3f4f7"></div>
<div class="abs" style="left:3px;top:674px;width:127px;height:4.5px;background:#c6cbd6;border-radius:2px"></div>
<!--/TREE-->
<!--RIGHT-->
<div class="t ptab" style="left:209px">Панель приборов</div>
<div class="t ptab" style="left:300px">Свойства</div>
<div class="t ptab" style="left:355px">SQL</div>
<div class="t ptab" style="left:385px">Статистика</div>
<div class="t ptab" style="left:449px">Зависимости</div>
<div class="t ptab" style="left:521px">Иждивенцы</div>
<svg style="left:588px;top:122.4px" width="11" height="9.2" viewBox="0 0 12 10"><rect x="0.5" y="0.5" width="11" height="9" fill="none" stroke="#222" stroke-width="1"/><path d="M0.5 3.4 H11.5 M0.5 6.4 H11.5 M4.2 0.5 V9.5 M7.8 0.5 V9.5" stroke="#222" stroke-width="0.9"/></svg>
<div class="t ptab" style="left:601px">public.orders/...</div>
<svg style="left:684px;top:122.4px" width="11" height="9.2" viewBox="0 0 12 10"><rect x="0.5" y="0.5" width="11" height="9" fill="none" stroke="#222" stroke-width="1"/><path d="M0.5 3.4 H11.5 M0.5 6.4 H11.5 M4.2 0.5 V9.5 M7.8 0.5 V9.5" stroke="#222" stroke-width="0.9"/></svg>
<div class="t ptab" style="left:697px">public.users_id...</div>
<svg style="left:781px;top:122.4px" width="11" height="9.2" viewBox="0 0 12 10"><rect x="0.5" y="0.5" width="11" height="9" fill="none" stroke="#222" stroke-width="1"/><path d="M0.5 3.4 H11.5 M0.5 6.4 H11.5 M4.2 0.5 V9.5 M7.8 0.5 V9.5" stroke="#222" stroke-width="0.9"/></svg>
<div class="t ptab" style="left:794px">public.a68809...</div>
<svg style="left:877px;top:122.4px" width="11" height="9.2" viewBox="0 0 12 10"><rect x="0.5" y="0.5" width="11" height="9" fill="none" stroke="#222" stroke-width="1"/><path d="M0.5 3.4 H11.5 M0.5 6.4 H11.5 M4.2 0.5 V9.5 M7.8 0.5 V9.5" stroke="#222" stroke-width="0.9"/></svg>
<div class="t ptab" style="left:891px">public.a68809...</div>
<svg style="left:974px;top:122.4px" width="11" height="9.2" viewBox="0 0 12 10"><rect x="0.5" y="0.5" width="11" height="9" fill="none" stroke="#222" stroke-width="1"/><path d="M0.5 3.4 H11.5 M0.5 6.4 H11.5 M4.2 0.5 V9.5 M7.8 0.5 V9.5" stroke="#222" stroke-width="0.9"/></svg>
<div class="t ptab" style="left:988px">public.a68809...</div>
<svg style="left:1071px;top:122.4px" width="11" height="9.2" viewBox="0 0 12 10"><rect x="0.5" y="0.5" width="11" height="9" fill="none" stroke="#222" stroke-width="1"/><path d="M0.5 3.4 H11.5 M0.5 6.4 H11.5 M4.2 0.5 V9.5 M7.8 0.5 V9.5" stroke="#222" stroke-width="0.9"/></svg>
<div class="t ptab" style="left:1085px">public.a68809...</div>
<svg style="left:1167px;top:122.4px" width="11" height="9.2" viewBox="0 0 12 10"><rect x="0.5" y="0.5" width="11" height="9" fill="none" stroke="#222" stroke-width="1"/><path d="M0.5 3.4 H11.5 M0.5 6.4 H11.5 M4.2 0.5 V9.5 M7.8 0.5 V9.5" stroke="#222" stroke-width="0.9"/></svg>
<div class="t ptab" style="left:1181px;width:46.5px;overflow:hidden">public.a68809...</div>
<svg style="left:1234px;top:122.5px" width="7" height="9" viewBox="0 0 7 9"><path d="M5.4 0.8 L1.6 4.5 L5.4 8.2" fill="none" stroke="#222" stroke-width="1.3"/></svg>
<svg style="left:1250px;top:122.5px" width="7" height="9" viewBox="0 0 7 9"><path d="M1.6 0.8 L5.4 4.5 L1.6 8.2" fill="none" stroke="#222" stroke-width="1.3"/></svg>
<svg style="left:1264px;top:122px" width="12" height="10" viewBox="0 0 12 10"><rect x="0.5" y="0.5" width="11" height="9" fill="none" stroke="#222" stroke-width="1"/><path d="M0.5 3.4 H11.5 M0.5 6.4 H11.5 M4.2 0.5 V9.5 M7.8 0.5 V9.5" stroke="#222" stroke-width="0.9"/><rect x="4.2" y="3.4" width="3.6" height="3" fill="#222"/><rect x="0.5" y="0.5" width="3.7" height="2.9" fill="#222"/><rect x="7.8" y="0.5" width="3.7" height="2.9" fill="#222"/></svg>
<div class="t ptab" style="left:1278px;color:#a33">p</div>
<div class="btn" style="left:204.8px;width:20.0px;background:#fff;border-color:#d3d8e0;"></div>
<svg style="left:209.6px;top:144.1px" width="10" height="9.5" viewBox="0 0 10 9.5"><ellipse cx="4" cy="1.7" rx="3.6" ry="1.5" fill="#1c1c1c"/><path d="M0.4 2.8 C1.4 4 6.6 4 7.6 2.8 V4.8 C6.6 6 1.4 6 0.4 4.8Z M0.4 5.8 C1.4 7 6.6 7 7.6 5.8 V7.8 C6.6 9 1.4 9 0.4 7.8Z" fill="#1c1c1c"/><path d="M4.6 5.6 H6.8 V4.2 L9.8 6.7 L6.8 9.2 V7.8 H4.6Z" fill="#1c1c1c" stroke="#fff" stroke-width="0.5"/></svg>
<div class="btn" style="left:230.5px;width:56.0px;background:#f6f7f9;border-color:#d3d8e0;"></div>
<div class="abs" style="left:251.5px;top:139.5px;width:1px;height:19px;background:#d3d8e0"></div>
<div class="abs" style="left:272px;top:139.5px;width:1px;height:19px;background:#d3d8e0"></div>
<svg style="left:235.0px;top:144.3px" width="12" height="9" viewBox="0 0 12 9"><path d="M0.6 8.4 V1 H4 L5 2 H9 V3.4 H2.8 L0.6 8.4Z" fill="#4a4f57"/><path d="M1.2 8.4 L3.2 4 H11.6 L9.6 8.4Z" fill="#4a4f57"/></svg>
<svg style="left:257.5px;top:144.3px" width="9" height="9" viewBox="0 0 9 9"><path d="M0.6 0.6 H6.8 L8.4 2.2 V8.4 H0.6Z" fill="#4a4f57"/><rect x="2" y="1.4" width="4" height="2" fill="#f6f7f9"/><circle cx="4.5" cy="6" r="1.3" fill="#f6f7f9"/></svg>
<svg style="left:276.0px;top:145.5px" width="7" height="6" viewBox="0 0 7 6"><path d="M1 1.4 L3.5 4 L6 1.4" fill="none" stroke="#777" stroke-width="1.2"/></svg>
<div class="btn" style="left:291.5px;width:22.0px;background:#f6f7f9;border-color:#d3d8e0;"></div>
<svg style="left:296.5px;top:143.8px" width="12" height="10" viewBox="0 0 12 10"><rect x="0.5" y="0.5" width="11" height="9" fill="none" stroke="#4a4f57" stroke-width="1"/><path d="M0.5 3.2 H11.5 M0.5 6.4 H11.5 M4.2 0.5 V9.5 M7.8 0.5 V9.5" stroke="#4a4f57" stroke-width="0.8"/><rect x="4.2" y="3.2" width="3.6" height="3.2" fill="#4a4f57"/></svg>
<div class="btn" style="left:319.5px;width:34.5px;background:#f6f7f9;border-color:#d3d8e0;"></div>
<div class="abs" style="left:341px;top:139.5px;width:1px;height:19px;background:#d3d8e0"></div>
<svg style="left:325.0px;top:143.8px" width="10" height="10" viewBox="0 0 10 10"><circle cx="4" cy="4" r="2.9" fill="none" stroke="#4a4f57" stroke-width="1.3"/><path d="M6.2 6.2 L9 9" stroke="#4a4f57" stroke-width="1.5" stroke-linecap="round"/></svg>
<svg style="left:344.0px;top:145.5px" width="7" height="6" viewBox="0 0 7 6"><path d="M1 1.4 L3.5 4 L6 1.4" fill="none" stroke="#777" stroke-width="1.2"/></svg>
<div class="btn" style="left:359.5px;width:53.0px;background:#f6f7f9;border-color:#d3d8e0;"></div>
<div class="abs" style="left:379.5px;top:139.5px;width:14px;height:19px;background:#fff;border:1px solid #d3d8e0"></div>
<svg style="left:365.0px;top:143.8px" width="9" height="10" viewBox="0 0 9 10"><rect x="2.8" y="0.5" width="5.6" height="7" rx="0.6" fill="#4a4f57"/><path d="M1.6 2 H0.8 V9.4 H6.4 V8.6" fill="none" stroke="#4a4f57" stroke-width="1.2"/></svg>
<svg style="left:383.0px;top:145.5px" width="7" height="6" viewBox="0 0 7 6"><path d="M1 1.4 L3.5 4 L6 1.4" fill="none" stroke="#222" stroke-width="1.2"/></svg>
<svg style="left:398.5px;top:143.8px" width="9" height="10" viewBox="0 0 9 10"><rect x="0.6" y="0.6" width="5" height="6.4" rx="0.5" fill="#4a4f57"/><rect x="3.6" y="3.2" width="4.8" height="6.2" rx="0.5" fill="#4a4f57" stroke="#f6f7f9" stroke-width="0.7"/></svg>
<div class="btn" style="left:419px;width:19px;background:#f6f7f9;border-color:#d3d8e0;"></div>
<svg style="left:424.5px;top:143.8px" width="8" height="10" viewBox="0 0 8 10"><path d="M0.4 1.6 H7.6 M2.8 1.4 V0.5 H5.2 V1.4" stroke="#4a4f57" stroke-width="0.9" fill="none"/><path d="M1 2.6 H7 L6.6 9.6 H1.4Z" fill="#4a4f57"/><path d="M2.8 3.8 V8.4 M4 3.8 V8.4 M5.2 3.8 V8.4" stroke="#f6f7f9" stroke-width="0.5"/></svg>
<div class="btn" style="left:444.5px;width:29.5px;background:#f6f7f9;border-color:#d3d8e0;"></div>
<svg style="left:450.0px;top:144.3px" width="10" height="9" viewBox="0 0 10 9"><path d="M6.2 1.4 H1 V8.2 H7.8 V5" fill="none" stroke="#4a4f57" stroke-width="1.1"/><path d="M3.6 6 L4 4.4 L8 0.6 L9.4 2 L5.4 5.8Z" fill="#4a4f57"/></svg>
<svg style="left:463.0px;top:145.5px" width="7" height="6" viewBox="0 0 7 6"><path d="M1 1.4 L3.5 4 L6 1.4" fill="none" stroke="#777" stroke-width="1.2"/></svg>
<div class="btn" style="left:479px;width:45.5px;background:#326690;border-color:#326690;"></div>
<svg style="left:487.0px;top:143.8px" width="10" height="10" viewBox="0 0 10 10"><path d="M0.6 0.8 H9.4 L6 4.6 V9.4 L4 8 V4.6Z" fill="#fff"/></svg>
<svg style="left:511.5px;top:144.5px" width="7" height="6" viewBox="0 0 7 6"><path d="M1 1.4 L3.5 4 L6 1.4" fill="none" stroke="#fff" stroke-width="1.2"/></svg>
<div class="abs" style="left:530px;top:139.5px;width:79.5px;height:19px;background:#fff;border-radius:2.5px"></div>
<div class="t" style="left:537.5px;top:144.8px;font-size:8.3px;color:#333">Безлимитный</div>
<svg style="left:598.5px;top:145.5px" width="7" height="6" viewBox="0 0 7 6"><path d="M1 1.4 L3.5 4 L6 1.4" fill="none" stroke="#222" stroke-width="1.2"/></svg>
<div class="btn" style="left:615.5px;width:52.0px;background:#f6f7f9;border-color:#d3d8e0;"></div>
<div class="abs" style="left:634.5px;top:139.5px;width:19px;height:19px;background:#fff;border:1px solid #d3d8e0"></div>
<div class="abs" style="left:653.5px;top:139.5px;width:1px;height:19px;background:#d3d8e0"></div>
<svg style="left:620.5px;top:144.3px" width="9" height="9" viewBox="0 0 9 9"><rect x="0.4" y="0.4" width="8.2" height="8.2" rx="0.8" fill="#70757c"/></svg>
<svg style="left:640.5px;top:143.3px" width="9" height="11" viewBox="0 0 9 11"><path d="M0.6 0.4 L8.6 5.5 L0.6 10.6Z" fill="#111"/></svg>
<svg style="left:657.5px;top:145.5px" width="7" height="6" viewBox="0 0 7 6"><path d="M1 1.4 L3.5 4 L6 1.4" fill="none" stroke="#777" stroke-width="1.2"/></svg>
<div class="btn" style="left:675.5px;width:53.0px;background:#f6f7f9;border-color:#d3d8e0;"></div>
<div class="abs" style="left:694.5px;top:139.5px;width:1px;height:19px;background:#d3d8e0"></div>
<div class="abs" style="left:715px;top:139.5px;width:1px;height:19px;background:#d3d8e0"></div>
<svg style="left:681.0px;top:143.8px" width="8" height="10" viewBox="0 0 8 10"><path d="M2.6 4.6 V1.2 Q3.2 0.4 3.8 1.2 V4 H4.4 Q5 3.4 5.4 4.2 Q6 3.6 6.4 4.4 Q7.2 4 7.4 5 V7.4 Q7.4 9.4 5.6 9.6 H3.8 Q2.6 9.4 1.8 8 L0.6 6 Q0.8 5 1.8 5.6Z" fill="#4a4f57"/></svg>
<svg style="left:700.0px;top:144.8px" width="10" height="8" viewBox="0 0 10 8"><rect x="0.5" y="0.5" width="9" height="7" rx="0.6" fill="none" stroke="#4a4f57" stroke-width="1"/><path d="M2 2.6 H2.8 M4 2.6 H8 M2 4.2 H2.8 M4 4.2 H8 M2 5.8 H2.8 M4 5.8 H8" stroke="#4a4f57" stroke-width="0.8"/></svg>
<svg style="left:718.5px;top:145.5px" width="7" height="6" viewBox="0 0 7 6"><path d="M1 1.4 L3.5 4 L6 1.4" fill="none" stroke="#777" stroke-width="1.2"/></svg>
<div class="btn" style="left:735px;width:41.5px;background:#f6f7f9;border-color:#d3d8e0;"></div>
<div class="abs" style="left:755.5px;top:139.5px;width:1px;height:19px;background:#d3d8e0"></div>
<svg style="left:740.0px;top:144.1px" width="10" height="9.5" viewBox="0 0 10 9.5"><ellipse cx="4" cy="1.6" rx="3.4" ry="1.3" fill="#7d838c"/><path d="M0.6 2.6 C1.6 3.6 6.4 3.6 7.4 2.6 V4.2 C6.4 5.2 1.6 5.2 0.6 4.2Z M0.6 5.2 C1.6 6.2 6.4 6.2 7.4 5.2 V6.8 C6.4 7.8 1.6 7.8 0.6 6.8Z" fill="#7d838c"/><circle cx="7" cy="6.6" r="2.3" fill="#f6f7f9" stroke="#7d838c" stroke-width="0.7"/><path d="M5.9 6.6 L6.7 7.4 L8.1 5.8" stroke="#7d838c" stroke-width="0.6" fill="none"/></svg>
<svg style="left:761.0px;top:144.1px" width="10" height="9.5" viewBox="0 0 10 9.5"><ellipse cx="4" cy="1.6" rx="3.4" ry="1.3" fill="#7d838c"/><path d="M0.6 2.6 C1.6 3.6 6.4 3.6 7.4 2.6 V4.2 C6.4 5.2 1.6 5.2 0.6 4.2Z M0.6 5.2 C1.6 6.2 6.4 6.2 7.4 5.2 V6.8 C6.4 7.8 1.6 7.8 0.6 6.8Z" fill="#7d838c"/><circle cx="7" cy="6.6" r="2.3" fill="#f6f7f9" stroke="#7d838c" stroke-width="0.7"/><path d="M5.8 6.6 A1.2 1.2 0 1 0 7 5.4" stroke="#7d838c" stroke-width="0.6" fill="none"/></svg>
<div class="btn" style="left:781.5px;width:29.5px;background:#fff;border-color:#d3d8e0;"></div>
<svg style="left:787.5px;top:144.3px" width="11" height="9" viewBox="0 0 11 9"><path d="M6.4 0.4 L10.4 4.4 L6.6 8.2 H3.4 L0.8 5.6Z" fill="#111"/><path d="M3 3.4 L7.4 7.6" stroke="#fff" stroke-width="0.7"/><path d="M3.8 7 L2.2 5.4 L3.4 4.2 L5.6 6.4 L5 7Z" fill="#fff"/><path d="M1 8.6 H10.4" stroke="#111" stroke-width="0.8"/></svg>
<svg style="left:800.5px;top:145.5px" width="7" height="6" viewBox="0 0 7 6"><path d="M1 1.4 L3.5 4 L6 1.4" fill="none" stroke="#222" stroke-width="1.2"/></svg>
<div class="btn" style="left:816px;width:21.5px;background:#fff;border-color:#d3d8e0;"></div>
<svg style="left:821.5px;top:143.8px" width="10" height="10" viewBox="0 0 10 10"><path d="M3.6 0.4 H6.4 V3.8 H8.6 L5 7.2 L1.4 3.8 H3.6Z" fill="#111"/><path d="M0.6 6.8 V9.4 H9.4 V6.8" fill="none" stroke="#111" stroke-width="1.3"/></svg>
<div class="btn" style="left:839.5px;width:31.0px;background:#f6f7f9;border-color:#d3d8e0;"></div>
<svg style="left:845.5px;top:143.8px" width="11" height="10" viewBox="0 0 11 10"><path d="M1 0.6 H8.4 V6.6 H10.4 Q10.4 9 8.4 9.2 H3 Q1.6 9 1.6 7.4 V2.6 H0.4 Q0.2 1 1 0.6Z" fill="#4a4f57"/><path d="M3.2 2.4 H7 M3.2 4 H7 M3.2 5.6 H7" stroke="#f6f7f9" stroke-width="0.5"/></svg>
<svg style="left:860.0px;top:145.5px" width="7" height="6" viewBox="0 0 7 6"><path d="M1 1.4 L3.5 4 L6 1.4" fill="none" stroke="#777" stroke-width="1.2"/></svg>
<div class="abs" style="left:227.5px;top:160.5px;width:1px;height:17.5px;background:#8a98a6"></div>
<div class="t" style="left:204px;top:164.6px;font-size:9.4px;color:#fff;letter-spacing:-0.14px;width:300px;text-indent:31px">public.a688093622/Drive_in/postgres@PostgreSQL 13</div>
<div class="abs" style="left:204px;top:178px;width:808px;height:21px;background:#fff;border-bottom:1px solid #e3e6eb"></div>
<div class="abs" style="left:204px;top:196.5px;width:96px;height:2.3px;background:#326690"></div>
<div class="t" style="left:209.5px;top:184.2px;font-size:9.5px;color:#326690;letter-spacing:-0.1px">Редактор запросов</div>
<div class="t" style="left:307.5px;top:184.2px;font-size:9.5px;color:#222;letter-spacing:-0.02px">История запросов</div>
<div class="t" style="left:233.6px;top:205.4px;font-family:'Liberation Mono','DejaVu Sans Mono',monospace;font-size:9.27px;color:#c57ab8"><span style="margin-left:-1.2px;margin-right:1.2px">SELECT</span> <span style="color:#666">*</span> FROM <span style="color:#b97dc4">public.</span><span style="color:#a3b6cf">a688093622</span></div>
<div class="t" style="left:233.6px;top:219.3px;font-family:'Liberation Mono','DejaVu Sans Mono',monospace;font-size:9.27px;color:#c57ab8">ORDER BY <span style="color:#a47fcb">id</span> ASC</div>
<div class="abs" style="left:1012px;top:198.5px;width:268px;height:1px;background:#e3e6eb"></div>
<div class="t" style="left:1019px;top:184.1px;font-size:9.4px;color:#222;letter-spacing:-0.1px">Scratch Pad</div>
<svg style="left:1265px;top:185px" width="7" height="7" viewBox="0 0 7 7"><path d="M1 1 L6 6 M6 1 L1 6" stroke="#111" stroke-width="1.5"/></svg>
<div class="abs" style="left:204px;top:431px;width:1076px;height:21px;background:#fff;border-top:1px solid #e3e6eb;border-bottom:1px solid #e3e6eb"></div>
<div class="abs" style="left:204px;top:449.5px;width:76px;height:2.3px;background:#326690"></div>
<div class="t" style="left:212px;top:438px;font-size:9.4px;color:#326690;letter-spacing:-0.1px">Вывод данных</div>
<div class="t" style="left:286.5px;top:438px;font-size:9.4px;color:#222;letter-spacing:-0.1px">Объясните</div>
<div class="t" style="left:347px;top:438px;font-size:9.4px;color:#222;letter-spacing:-0.1px">Сообщения</div>
<div class="t" style="left:411px;top:438px;font-size:9.4px;color:#222;letter-spacing:-0.1px">Уведомления</div>
<!--/RIGHT-->
<!--GRID-->
<div class="abs" style="left:204px;top:452.5px;width:1076px;height:27.0px;background:#fff"></div>
<div class="abs" style="left:203px;top:479.5px;width:943.5px;height:82.5px;background:#fff"></div>
<div class="abs" style="left:203px;top:479.0px;width:943.5px;height:1px;background:#e3e6ea"></div>
<div class="abs" style="left:203px;top:495.5px;width:943.5px;height:1px;background:#e7eaee"></div>
<div class="abs" style="left:203px;top:512.0px;width:943.5px;height:1px;background:#e7eaee"></div>
<div class="abs" style="left:203px;top:528.5px;width:943.5px;height:1px;background:#e7eaee"></div>
<div class="abs" style="left:203px;top:545.0px;width:943.5px;height:1px;background:#e7eaee"></div>
<div class="abs" style="left:222.0px;top:452.5px;width:1px;height:109.5px;background:#e7eaee"></div>
<div class="abs" style="left:293.0px;top:452.5px;width:1px;height:109.5px;background:#e7eaee"></div>
<div class="abs" style="left:338.0px;top:452.5px;width:1px;height:109.5px;background:#e7eaee"></div>
<div class="abs" style="left:420.0px;top:452.5px;width:1px;height:109.5px;background:#e7eaee"></div>
<div class="abs" style="left:459.0px;top:452.5px;width:1px;height:109.5px;background:#e7eaee"></div>
<div class="abs" style="left:528.5px;top:452.5px;width:1px;height:109.5px;background:#e7eaee"></div>
<div class="abs" style="left:567.5px;top:452.5px;width:1px;height:109.5px;background:#e7eaee"></div>
<div class="abs" style="left:616.5px;top:452.5px;width:1px;height:109.5px;background:#e7eaee"></div>
<div class="abs" style="left:660.5px;top:452.5px;width:1px;height:109.5px;background:#e7eaee"></div>
<div class="abs" style="left:709.0px;top:452.5px;width:1px;height:109.5px;background:#e7eaee"></div>
<div class="abs" style="left:755.5px;top:452.5px;width:1px;height:109.5px;background:#e7eaee"></div>
<div class="abs" style="left:805.0px;top:452.5px;width:1px;height:109.5px;background:#e7eaee"></div>
<div class="abs" style="left:862.0px;top:452.5px;width:1px;height:109.5px;background:#e7eaee"></div>
<div class="abs" style="left:913.0px;top:452.5px;width:1px;height:109.5px;background:#e7eaee"></div>
<div class="abs" style="left:974.5px;top:452.5px;width:1px;height:109.5px;background:#e7eaee"></div>
<div class="abs" style="left:1025.5px;top:452.5px;width:1px;height:109.5px;background:#e7eaee"></div>
<div class="abs" style="left:1106.5px;top:452.5px;width:1px;height:109.5px;background:#e7eaee"></div>
<div class="abs" style="left:1146.0px;top:452.5px;width:1px;height:109.5px;background:#e7eaee"></div>
<div class="abs" style="left:202.5px;top:452.5px;width:1px;height:109.5px;background:#e7eaee"></div>
<svg style="left:210.5px;top:471px" width="6" height="6" viewBox="0 0 6 6"><path d="M5.6 0.4 V5.6 H0.4Z" fill="#555"/></svg>
<div class="gh" style="left:226.5px;top:458.4px;width:66.5px;font-weight:bold;color:#222;letter-spacing:-0.35px">мне бы</div>
<div class="gh" style="left:226.5px;top:468.4px;width:66.5px;color:#444">[PK] целое число</div>
<svg style="left:281.5px;top:462.3px" width="8" height="8" viewBox="0 0 8 8"><path d="M0.2 8 L0.7 5.4 L5 1.1 L7 3.1 L2.7 7.4Z M5.7 0.6 L6.3 0 Q6.8 -0.2 7.2 0.2 L7.9 0.9 Q8.3 1.3 8 1.8 L7.5 2.4Z" fill="#2a2a2a"/></svg>
<div class="gh" style="left:297.5px;top:458.4px;width:40.5px;font-weight:bold;color:#222;letter-spacing:-0.35px">класс</div>
<div class="gh" style="left:297.5px;top:468.4px;width:40.5px;color:#444">текст</div>
<svg style="left:326.5px;top:462.3px" width="8" height="8" viewBox="0 0 8 8"><path d="M0.2 8 L0.7 5.4 L5 1.1 L7 3.1 L2.7 7.4Z M5.7 0.6 L6.3 0 Q6.8 -0.2 7.2 0.2 L7.9 0.9 Q8.3 1.3 8 1.8 L7.5 2.4Z" fill="#2a2a2a"/></svg>
<div class="gh" style="left:342.5px;top:458.4px;width:77.5px;font-weight:bold;color:#222;letter-spacing:-0.35px">name_original</div>
<div class="gh" style="left:342.5px;top:468.4px;width:77.5px;color:#444">текст</div>
<svg style="left:408.5px;top:462.3px" width="8" height="8" viewBox="0 0 8 8"><path d="M0.2 8 L0.7 5.4 L5 1.1 L7 3.1 L2.7 7.4Z M5.7 0.6 L6.3 0 Q6.8 -0.2 7.2 0.2 L7.9 0.9 Q8.3 1.3 8 1.8 L7.5 2.4Z" fill="#2a2a2a"/></svg>
<div class="gh" style="left:424.5px;top:458.4px;width:34.5px;font-weight:bold;color:#222;letter-spacing:-0.35px">имя</div>
<div class="gh" style="left:424.5px;top:468.4px;width:34.5px;color:#444">текст</div>
<svg style="left:447.5px;top:462.3px" width="8" height="8" viewBox="0 0 8 8"><path d="M0.2 8 L0.7 5.4 L5 1.1 L7 3.1 L2.7 7.4Z M5.7 0.6 L6.3 0 Q6.8 -0.2 7.2 0.2 L7.9 0.9 Q8.3 1.3 8 1.8 L7.5 2.4Z" fill="#2a2a2a"/></svg>
<div class="gh" style="left:463.5px;top:458.4px;width:65.0px;font-weight:bold;color:#222;letter-spacing:-0.35px">имя_пользователя</div>
<div class="gh" style="left:463.5px;top:468.4px;width:65.0px;color:#444">текст</div>
<svg style="left:517.0px;top:462.3px" width="8" height="8" viewBox="0 0 8 8"><path d="M0.2 8 L0.7 5.4 L5 1.1 L7 3.1 L2.7 7.4Z M5.7 0.6 L6.3 0 Q6.8 -0.2 7.2 0.2 L7.9 0.9 Q8.3 1.3 8 1.8 L7.5 2.4Z" fill="#2a2a2a"/></svg>
<div class="gh" style="left:533.0px;top:458.4px;width:34.5px;font-weight:bold;color:#222;letter-spacing:-0.35px">магазин...</div>
<div class="gh" style="left:533.0px;top:468.4px;width:34.5px;color:#444">текст</div>
<svg style="left:556.0px;top:462.3px" width="8" height="8" viewBox="0 0 8 8"><path d="M0.2 8 L0.7 5.4 L5 1.1 L7 3.1 L2.7 7.4Z M5.7 0.6 L6.3 0 Q6.8 -0.2 7.2 0.2 L7.9 0.9 Q8.3 1.3 8 1.8 L7.5 2.4Z" fill="#2a2a2a"/></svg>
<div class="gh" style="left:572.0px;top:458.4px;width:44.5px;font-weight:bold;color:#222;letter-spacing:-0.35px">Телефон</div>
<div class="gh" style="left:572.0px;top:468.4px;width:44.5px;color:#444">текст</div>
<svg style="left:605.0px;top:462.3px" width="8" height="8" viewBox="0 0 8 8"><path d="M0.2 8 L0.7 5.4 L5 1.1 L7 3.1 L2.7 7.4Z M5.7 0.6 L6.3 0 Q6.8 -0.2 7.2 0.2 L7.9 0.9 Q8.3 1.3 8 1.8 L7.5 2.4Z" fill="#2a2a2a"/></svg>
<div class="gh" style="left:621.0px;top:458.4px;width:39.5px;font-weight:bold;color:#222;letter-spacing:-0.35px">цена</div>
<div class="gh" style="left:621.0px;top:468.4px;width:39.5px;color:#444">текст</div>
<svg style="left:649.0px;top:462.3px" width="8" height="8" viewBox="0 0 8 8"><path d="M0.2 8 L0.7 5.4 L5 1.1 L7 3.1 L2.7 7.4Z M5.7 0.6 L6.3 0 Q6.8 -0.2 7.2 0.2 L7.9 0.9 Q8.3 1.3 8 1.8 L7.5 2.4Z" fill="#2a2a2a"/></svg>
<div class="gh" style="left:665.0px;top:458.4px;width:44.0px;font-weight:bold;color:#222;letter-spacing:-0.35px">статистика...</div>
<div class="gh" style="left:665.0px;top:468.4px;width:44.0px;color:#444">текст</div>
<svg style="left:697.5px;top:462.3px" width="8" height="8" viewBox="0 0 8 8"><path d="M0.2 8 L0.7 5.4 L5 1.1 L7 3.1 L2.7 7.4Z M5.7 0.6 L6.3 0 Q6.8 -0.2 7.2 0.2 L7.9 0.9 Q8.3 1.3 8 1.8 L7.5 2.4Z" fill="#2a2a2a"/></svg>
<div class="gh" style="left:713.5px;top:458.4px;width:42.0px;font-weight:bold;color:#222;letter-spacing:-0.35px">считать</div>
<div class="gh" style="left:713.5px;top:468.4px;width:42.0px;color:#444">текст</div>
<svg style="left:744.0px;top:462.3px" width="8" height="8" viewBox="0 0 8 8"><path d="M0.2 8 L0.7 5.4 L5 1.1 L7 3.1 L2.7 7.4Z M5.7 0.6 L6.3 0 Q6.8 -0.2 7.2 0.2 L7.9 0.9 Q8.3 1.3 8 1.8 L7.5 2.4Z" fill="#2a2a2a"/></svg>
<div class="gh" style="left:760.0px;top:458.4px;width:45.0px;font-weight:bold;color:#222;letter-spacing:-0.35px">оплата</div>
<div class="gh" style="left:760.0px;top:468.4px;width:45.0px;color:#444">текст</div>
<svg style="left:793.5px;top:462.3px" width="8" height="8" viewBox="0 0 8 8"><path d="M0.2 8 L0.7 5.4 L5 1.1 L7 3.1 L2.7 7.4Z M5.7 0.6 L6.3 0 Q6.8 -0.2 7.2 0.2 L7.9 0.9 Q8.3 1.3 8 1.8 L7.5 2.4Z" fill="#2a2a2a"/></svg>
<div class="gh" style="left:809.5px;top:458.4px;width:52.5px;font-weight:bold;color:#222;letter-spacing:-0.35px">расположение</div>
<div class="gh" style="left:809.5px;top:468.4px;width:52.5px;color:#444">текст</div>
<svg style="left:850.5px;top:462.3px" width="8" height="8" viewBox="0 0 8 8"><path d="M0.2 8 L0.7 5.4 L5 1.1 L7 3.1 L2.7 7.4Z M5.7 0.6 L6.3 0 Q6.8 -0.2 7.2 0.2 L7.9 0.9 Q8.3 1.3 8 1.8 L7.5 2.4Z" fill="#2a2a2a"/></svg>
<div class="gh" style="left:866.5px;top:458.4px;width:46.5px;font-weight:bold;color:#222;letter-spacing:-0.35px">адрес</div>
<div class="gh" style="left:866.5px;top:468.4px;width:46.5px;color:#444">текст</div>
<svg style="left:901.5px;top:462.3px" width="8" height="8" viewBox="0 0 8 8"><path d="M0.2 8 L0.7 5.4 L5 1.1 L7 3.1 L2.7 7.4Z M5.7 0.6 L6.3 0 Q6.8 -0.2 7.2 0.2 L7.9 0.9 Q8.3 1.3 8 1.8 L7.5 2.4Z" fill="#2a2a2a"/></svg>
<div class="gh" style="left:917.5px;top:458.4px;width:57.0px;font-weight:bold;color:#222;letter-spacing:-0.35px">клавиатура</div>
<div class="gh" style="left:917.5px;top:468.4px;width:57.0px;color:#444">текст</div>
<svg style="left:963.0px;top:462.3px" width="8" height="8" viewBox="0 0 8 8"><path d="M0.2 8 L0.7 5.4 L5 1.1 L7 3.1 L2.7 7.4Z M5.7 0.6 L6.3 0 Q6.8 -0.2 7.2 0.2 L7.9 0.9 Q8.3 1.3 8 1.8 L7.5 2.4Z" fill="#2a2a2a"/></svg>
<div class="gh" style="left:979.0px;top:458.4px;width:46.5px;font-weight:bold;color:#222;letter-spacing:-0.35px">Деньги</div>
<div class="gh" style="left:979.0px;top:468.4px;width:46.5px;color:#444">текст</div>
<svg style="left:1014.0px;top:462.3px" width="8" height="8" viewBox="0 0 8 8"><path d="M0.2 8 L0.7 5.4 L5 1.1 L7 3.1 L2.7 7.4Z M5.7 0.6 L6.3 0 Q6.8 -0.2 7.2 0.2 L7.9 0.9 Q8.3 1.3 8 1.8 L7.5 2.4Z" fill="#2a2a2a"/></svg>
<div class="gh" style="left:1030.0px;top:458.4px;width:76.5px;font-weight:bold;color:#222;letter-spacing:-0.35px">shop_money</div>
<div class="gh" style="left:1030.0px;top:468.4px;width:76.5px;color:#444">текст</div>
<svg style="left:1095.0px;top:462.3px" width="8" height="8" viewBox="0 0 8 8"><path d="M0.2 8 L0.7 5.4 L5 1.1 L7 3.1 L2.7 7.4Z M5.7 0.6 L6.3 0 Q6.8 -0.2 7.2 0.2 L7.9 0.9 Q8.3 1.3 8 1.8 L7.5 2.4Z" fill="#2a2a2a"/></svg>
<div class="gh" style="left:1111.0px;top:458.4px;width:35.0px;font-weight:bold;color:#222;letter-spacing:-0.35px">GPS</div>
<div class="gh" style="left:1111.0px;top:468.4px;width:35.0px;color:#444">текст</div>
<svg style="left:1134.5px;top:462.3px" width="8" height="8" viewBox="0 0 8 8"><path d="M0.2 8 L0.7 5.4 L5 1.1 L7 3.1 L2.7 7.4Z M5.7 0.6 L6.3 0 Q6.8 -0.2 7.2 0.2 L7.9 0.9 Q8.3 1.3 8 1.8 L7.5 2.4Z" fill="#2a2a2a"/></svg>
<div class="gc" style="left:203px;top:485.2px;width:19.5px;text-align:center;color:#444;font-size:8.8px">1</div>
<div class="gc" style="left:222.5px;top:485.2px;width:67.0px;text-align:right">1</div>
<div class="gc" style="left:297.5px;top:485.2px;width:40.5px">0</div>
<div class="gc nul" style="left:342.5px;top:485.2px;width:77.5px">[значение NULL]</div>
<div class="gc nul" style="left:424.5px;top:485.2px;width:34.5px">[значение NULL]</div>
<div class="gc nul" style="left:463.5px;top:485.2px;width:65.0px">[значение NULL]</div>
<div class="gc nul" style="left:533.0px;top:485.2px;width:34.5px">[значение NULL]</div>
<div class="gc" style="left:572.0px;top:485.2px;width:44.5px">+7939333...</div>
<div class="gc nul" style="left:621.0px;top:485.2px;width:39.5px">[значение NULL]</div>
<div class="gc" style="left:665.0px;top:485.2px;width:44.0px">0</div>
<div class="gc" style="left:713.5px;top:485.2px;width:42.0px">7</div>
<div class="gc nul" style="left:760.0px;top:485.2px;width:45.0px">[значение NULL]</div>
<div class="gc" style="left:809.5px;top:485.2px;width:52.5px">2</div>
<div class="gc nul" style="left:866.5px;top:485.2px;width:46.5px">[значение NULL]</div>
<div class="gc" style="left:917.5px;top:485.2px;width:57.0px">0</div>
<div class="gc nul" style="left:979.0px;top:485.2px;width:46.5px">[значение NULL]</div>
<div class="gc" style="left:1030.0px;top:485.2px;width:76.5px">| MeatFish | Жар с...</div>
<div class="gc nul" style="left:1111.0px;top:485.2px;width:35.0px">[значение NULL]</div>
<div class="gc" style="left:203px;top:501.8px;width:19.5px;text-align:center;color:#444;font-size:8.8px">2</div>
<div class="gc" style="left:222.5px;top:501.8px;width:67.0px;text-align:right">5</div>
<div class="gc nul" style="left:297.5px;top:501.8px;width:40.5px">[значение NULL]</div>
<div class="gc" style="left:342.5px;top:501.8px;width:77.5px">120 90</div>
<div class="gc" style="left:424.5px;top:501.8px;width:34.5px">Тимур</div>
<div class="gc" style="left:463.5px;top:501.8px;width:65.0px">Hevevs</div>
<div class="gc" style="left:533.0px;top:501.8px;width:34.5px">Мясо р...</div>
<div class="gc nul" style="left:572.0px;top:501.8px;width:44.5px">[значение NULL]</div>
<div class="gc" style="left:621.0px;top:501.8px;width:39.5px">Мсо</div>
<div class="gc nul" style="left:665.0px;top:501.8px;width:44.0px">[значение NULL]</div>
<div class="gc nul" style="left:713.5px;top:501.8px;width:42.0px">[значение NULL]</div>
<div class="gc nul" style="left:760.0px;top:501.8px;width:45.0px">[значение NULL]</div>
<div class="gc nul" style="left:809.5px;top:501.8px;width:52.5px">[значение NULL]</div>
<div class="gc" style="left:866.5px;top:501.8px;width:46.5px">1</div>
<div class="gc nul" style="left:917.5px;top:501.8px;width:57.0px">[значение NULL]</div>
<div class="gc nul" style="left:979.0px;top:501.8px;width:46.5px">[значение NULL]</div>
<div class="gc nul" style="left:1030.0px;top:501.8px;width:76.5px">[значение NULL]</div>
<div class="gc nul" style="left:1111.0px;top:501.8px;width:35.0px">[значение NULL]</div>
<div class="gc" style="left:203px;top:518.2px;width:19.5px;text-align:center;color:#444;font-size:8.8px">3</div>
<div class="gc" style="left:222.5px;top:518.2px;width:67.0px;text-align:right">6</div>
<div class="gc nul" style="left:297.5px;top:518.2px;width:40.5px">[значение NULL]</div>
<div class="gc" style="left:342.5px;top:518.2px;width:77.5px">120 90</div>
<div class="gc" style="left:424.5px;top:518.2px;width:34.5px">Тимур</div>
<div class="gc" style="left:463.5px;top:518.2px;width:65.0px">Hevevs</div>
<div class="gc" style="left:533.0px;top:518.2px;width:34.5px">Жар св...</div>
<div class="gc nul" style="left:572.0px;top:518.2px;width:44.5px">[значение NULL]</div>
<div class="gc" style="left:621.0px;top:518.2px;width:39.5px">хлеб (ж...</div>
<div class="gc nul" style="left:665.0px;top:518.2px;width:44.0px">[значение NULL]</div>
<div class="gc nul" style="left:713.5px;top:518.2px;width:42.0px">[значение NULL]</div>
<div class="gc nul" style="left:760.0px;top:518.2px;width:45.0px">[значение NULL]</div>
<div class="gc nul" style="left:809.5px;top:518.2px;width:52.5px">[значение NULL]</div>
<div class="gc" style="left:866.5px;top:518.2px;width:46.5px">1</div>
<div class="gc nul" style="left:917.5px;top:518.2px;width:57.0px">[значение NULL]</div>
<div class="gc nul" style="left:979.0px;top:518.2px;width:46.5px">[значение NULL]</div>
<div class="gc nul" style="left:1030.0px;top:518.2px;width:76.5px">[значение NULL]</div>
<div class="gc nul" style="left:1111.0px;top:518.2px;width:35.0px">[значение NULL]</div>
<div class="gc" style="left:203px;top:534.8px;width:19.5px;text-align:center;color:#444;font-size:8.8px">4</div>
<div class="gc" style="left:222.5px;top:534.8px;width:67.0px;text-align:right">7</div>
<div class="gc nul" style="left:297.5px;top:534.8px;width:40.5px">[значение NULL]</div>
<div class="gc" style="left:342.5px;top:534.8px;width:77.5px">120 71</div>
<div class="gc" style="left:424.5px;top:534.8px;width:34.5px">Тимур</div>
<div class="gc" style="left:463.5px;top:534.8px;width:65.0px">Hevevs</div>
<div class="gc" style="left:533.0px;top:534.8px;width:34.5px">Жар св...</div>
<div class="gc nul" style="left:572.0px;top:534.8px;width:44.5px">[значение NULL]</div>
<div class="gc" style="left:621.0px;top:534.8px;width:39.5px">влоарлп...</div>
<div class="gc nul" style="left:665.0px;top:534.8px;width:44.0px">[значение NULL]</div>
<div class="gc nul" style="left:713.5px;top:534.8px;width:42.0px">[значение NULL]</div>
<div class="gc nul" style="left:760.0px;top:534.8px;width:45.0px">[значение NULL]</div>
<div class="gc nul" style="left:809.5px;top:534.8px;width:52.5px">[значение NULL]</div>
<div class="gc" style="left:866.5px;top:534.8px;width:46.5px">1</div>
<div class="gc nul" style="left:917.5px;top:534.8px;width:57.0px">[значение NULL]</div>
<div class="gc nul" style="left:979.0px;top:534.8px;width:46.5px">[значение NULL]</div>
<div class="gc nul" style="left:1030.0px;top:534.8px;width:76.5px">[значение NULL]</div>
<div class="gc nul" style="left:1111.0px;top:534.8px;width:35.0px">[значение NULL]</div>
<div class="t" style="left:928px;top:657px;font-size:13.5px;color:#9da2a9;letter-spacing:-0.1px">Активация Windows</div>
<div class="t" style="left:928px;top:674px;font-size:10.2px;color:#b0b4ba;letter-spacing:0px">Чтобы активировать Windows, перейдите в раздел "Параметры".</div>
<!--/GRID-->
<!--MENU-->
<div class="abs" id="menu"></div>
<div class="abs" style="left:146px;top:189px;width:120px;height:1px;background:#e3e6eb"></div>
<div class="mi" style="top:172.2px">Create</div>
<svg style="left:255px;top:171.9px" width="6" height="7" viewBox="0 0 6 7"><path d="M1.4 0.8 L4.2 3.5 L1.4 6.2" fill="none" stroke="#333" stroke-width="1.1"/></svg>
<div class="mi" style="top:198.2px">Refresh...</div>
<div class="mi" style="top:215.8px">Count Rows</div>
<div class="mi" style="top:233.4px">Delete/Drop</div>
<div class="mi" style="top:251.0px">Drop Cascade</div>
<div class="mi" style="top:268.6px">Reset Statistics</div>
<div class="mi" style="top:286.4px">Import/Export...</div>
<div class="mi" style="top:304.2px">Maintenance...</div>
<div class="mi" style="top:321.8px">Scripts</div>
<svg style="left:255px;top:322.3px" width="6" height="7" viewBox="0 0 6 7"><path d="M1.4 0.8 L4.2 3.5 L1.4 6.2" fill="none" stroke="#333" stroke-width="1.1"/></svg>
<div class="mi" style="top:339.4px">Truncate</div>
<svg style="left:255px;top:339.9px" width="6" height="7" viewBox="0 0 6 7"><path d="M1.4 0.8 L4.2 3.5 L1.4 6.2" fill="none" stroke="#333" stroke-width="1.1"/></svg>
<div class="mi" style="top:357.2px">Backup...</div>
<div class="mi" style="top:375.0px">Restore...</div>
<div class="mi" style="top:392.6px">View/Edit Data</div>
<svg style="left:255px;top:393.1px" width="6" height="7" viewBox="0 0 6 7"><path d="M1.4 0.8 L4.2 3.5 L1.4 6.2" fill="none" stroke="#333" stroke-width="1.1"/></svg>
<div class="mi" style="top:410.4px">Search Objects...</div>
<div class="mi" style="top:428.0px">Query Tool...</div>
<div class="mi" style="top:445.8px">Properties...</div>
<!--/MENU-->
<!-- ===== downloads ===== -->
<div class="abs" id="dl"></div>
<!--DL-->
<svg style="left:14.5px;top:694.5px" width="11" height="12" viewBox="0 0 11 12"><path d="M0.6 0.4 H6.6 L9 2.8 V11.4 H0.6Z" fill="#fff" stroke="#b8bcc2" stroke-width="0.7"/><path d="M3 3.2 H6 V5.4 H3.6 V7 H2.2 V4Z" fill="#3b7cb8"/><path d="M8 8.6 H5 V6.4 H7.4 V4.8 H8.8 V7.8Z" fill="#f2c53d"/></svg>
<div class="t dlt" style="left:32.5px">keyboard.py</div>
<svg style="left:138.0px;top:698.5px" width="8" height="6" viewBox="0 0 8 6"><path d="M1 4.6 L4 1.6 L7 4.6" fill="none" stroke="#5f6368" stroke-width="1.1"/></svg>
<svg style="left:167.5px;top:695px" width="13" height="12" viewBox="0 0 13 12"><path d="M2.4 0.4 H10.6 V4 H2.4Z" fill="#fff" stroke="#d0393b" stroke-width="0.9"/><rect x="0.4" y="3.4" width="12" height="7.4" rx="1.4" fill="#d6282c"/><text x="6.4" y="9" font-size="4.6" fill="#fff" text-anchor="middle" font-family="Liberation Sans, sans-serif" font-weight="bold">PDF</text></svg>
<div class="t dlt" style="left:188px">Презентация без....pdf</div>
<svg style="left:293.0px;top:698.5px" width="8" height="6" viewBox="0 0 8 6"><path d="M1 4.6 L4 1.6 L7 4.6" fill="none" stroke="#5f6368" stroke-width="1.1"/></svg>
<svg style="left:324px;top:695.5px" width="11" height="10" viewBox="0 0 11 10"><rect x="0.4" y="2" width="9.6" height="7" fill="#6aa84f"/><rect x="0.4" y="0.6" width="6" height="5" fill="#f1c232"/><rect x="5" y="4" width="5.4" height="3.6" fill="#3d85c6"/><rect x="2" y="6" width="4" height="2.4" fill="#a2c4a0"/></svg>
<div class="t dlt" style="left:343px">postgresql-13.1-1-....exe</div>
<svg style="left:448.5px;top:698.5px" width="8" height="6" viewBox="0 0 8 6"><path d="M1 4.6 L4 1.6 L7 4.6" fill="none" stroke="#5f6368" stroke-width="1.1"/></svg>
<svg style="left:480px;top:694.5px" width="9" height="12" viewBox="0 0 9 12"><path d="M0.6 0.5 H5.6 L8.2 3.1 V11.3 H0.6Z" fill="#fff" stroke="#8a8f96" stroke-width="0.8"/><path d="M5.6 0.5 V3.1 H8.2" fill="none" stroke="#8a8f96" stroke-width="0.7"/></svg>
<div class="t dlt" style="left:498.5px">postgresql-10.15-....run</div>
<svg style="left:604.0px;top:698.5px" width="8" height="6" viewBox="0 0 8 6"><path d="M1 4.6 L4 1.6 L7 4.6" fill="none" stroke="#5f6368" stroke-width="1.1"/></svg>
<svg style="left:635px;top:694.5px" width="11" height="12" viewBox="0 0 11 12"><path d="M0.6 0.4 H6.6 L9 2.8 V11.4 H0.6Z" fill="#fff" stroke="#b8bcc2" stroke-width="0.7"/><path d="M3 3.2 H6 V5.4 H3.6 V7 H2.2 V4Z" fill="#3b7cb8"/><path d="M8 8.6 H5 V6.4 H7.4 V4.8 H8.8 V7.8Z" fill="#f2c53d"/></svg>
<div class="t dlt" style="left:654px">Ярмака.py</div>
<svg style="left:758.5px;top:698.5px" width="8" height="6" viewBox="0 0 8 6"><path d="M1 4.6 L4 1.6 L7 4.6" fill="none" stroke="#5f6368" stroke-width="1.1"/></svg>
<svg style="left:789.5px;top:695px" width="13" height="12" viewBox="0 0 13 12"><path d="M2.4 0.4 H10.6 V4 H2.4Z" fill="#fff" stroke="#d0393b" stroke-width="0.9"/><rect x="0.4" y="3.4" width="12" height="7.4" rx="1.4" fill="#d6282c"/><text x="6.4" y="9" font-size="4.6" fill="#fff" text-anchor="middle" font-family="Liberation Sans, sans-serif" font-weight="bold">PDF</text></svg>
<div class="t dlt" style="left:810px">Презентация без....pdf</div>
<svg style="left:915.0px;top:698.5px" width="8" height="6" viewBox="0 0 8 6"><path d="M1 4.6 L4 1.6 L7 4.6" fill="none" stroke="#5f6368" stroke-width="1.1"/></svg>
<div class="dsep" style="left:157.5px;top:687px;height:29px"></div>
<div class="dsep" style="left:312.5px;top:687px;height:29px"></div>
<div class="dsep" style="left:468px;top:687px;height:29px"></div>
<div class="dsep" style="left:623px;top:687px;height:29px"></div>
<div class="dsep" style="left:778.5px;top:687px;height:29px"></div>
<div class="dsep" style="left:934px;top:687px;height:29px"></div>
<div class="abs" style="left:1185px;top:691px;width:71px;height:19.5px;border:1px solid #dadce0;border-radius:3px;background:#fff"></div>
<div class="t" style="left:1196px;top:697.5px;font-size:8.2px;color:#1a73e8;font-weight:bold;letter-spacing:-0.25px">Показать все</div>
<svg style="left:1263.5px;top:697.5px" width="8" height="8" viewBox="0 0 8 8"><path d="M1 1 L7 7 M7 1 L1 7" stroke="#3c4043" stroke-width="1.2"/></svg>
<!--/DL-->
</div>
</body>
</html>
